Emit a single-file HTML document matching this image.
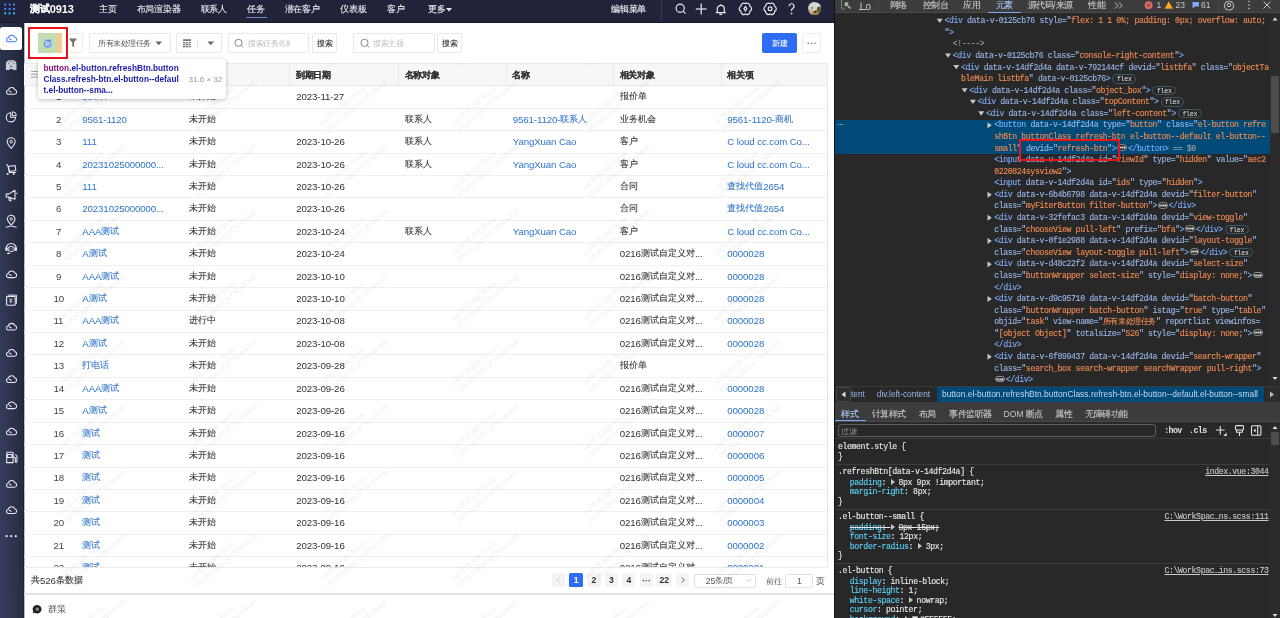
<!DOCTYPE html><html><head><meta charset="utf-8"><style>
*{box-sizing:border-box;margin:0;padding:0}
html,body{width:1280px;height:618px;overflow:hidden;background:#fff;font-family:"Liberation Sans",sans-serif}
.a{position:absolute}
#topnav{left:0;top:0;width:834px;height:23px;background:#1f2140;border-bottom:1px solid #15172e}
#side{left:0;top:23px;width:24px;height:595px;background:linear-gradient(#262a40,#3a4160)}
#content{left:24px;top:23px;width:810px;height:595px;background:#fff}
#dt{left:834px;top:0;width:446px;height:618px;background:#282828;border-left:1px solid #111}
.nv{position:absolute;color:#e8e8ee;font-size:9px;top:3px;white-space:nowrap}
.c{position:absolute;font-size:9.3px;color:#333;white-space:nowrap;line-height:12px}
.lk{color:#2e73c4}
.hd{position:absolute;font-size:8.8px;font-weight:bold;color:#333;white-space:nowrap;line-height:12px}
.btn{position:absolute;border:1px solid #e6e6e6;border-radius:2px;background:#fff}
.ln{position:absolute;white-space:pre;font-family:"Liberation Mono",monospace;font-size:8.2px;letter-spacing:-0.39px;-webkit-text-stroke:0.12px currentColor;color:#e8eaed;height:11.5px;line-height:11.5px}
.tg{color:#7cacf8}.an{color:#9ab6e8}.av{color:#f28b54}.cm{color:#a09b8f}.gr{color:#9aa0a6}
.badge{display:inline-block;border:1px solid #3e5868;border-radius:5px;font-family:"Liberation Mono",monospace;font-size:6.5px;letter-spacing:-0.2px;-webkit-text-stroke:0;line-height:9px;height:9.5px;padding:0 3.5px;color:#e0e0e0;vertical-align:middle;margin-left:2px}
.ell{display:inline-block;width:9.5px;height:6.5px;background:#2a2a2a;border:1px solid #8a8a8a;border-radius:3.5px;vertical-align:middle;position:relative;top:-1px;margin-left:1px;margin-right:1px;background-image:radial-gradient(circle,#eee 0.8px,transparent 1px);background-size:2.2px 6px;background-position:1px -0.5px;background-repeat:repeat-x}
.sl{position:absolute;white-space:pre;font-family:"Liberation Mono",monospace;font-size:8.2px;letter-spacing:-0.39px;-webkit-text-stroke:0.12px currentColor;color:#e8eaed;line-height:9.6px;height:9.6px}
.pn{color:#5cd5fb}
</style></head><body>
<div class="a" style="left:0;top:0;width:834px;height:23px;background:#21233b;border-bottom:1px solid #17192c"></div>
<svg class="a" style="left:0;top:0" width="24" height="22"><circle cx="5.2" cy="4.6" r="1.15" fill="#3d8df5"/><circle cx="9.6" cy="4.6" r="1.15" fill="#3d8df5"/><circle cx="14.0" cy="4.6" r="1.15" fill="#3d8df5"/><circle cx="5.2" cy="9.0" r="1.15" fill="#3d8df5"/><circle cx="9.6" cy="9.0" r="1.15" fill="#3d8df5"/><circle cx="14.0" cy="9.0" r="1.15" fill="#3d8df5"/><circle cx="5.2" cy="13.4" r="1.15" fill="#3fb6e8"/><circle cx="9.6" cy="13.4" r="1.15" fill="#3fb6e8"/><circle cx="14.0" cy="13.4" r="1.15" fill="#3fb6e8"/></svg>
<div class="a" style="left:29.5px;top:1.8px;white-space:nowrap;line-height:12px;color:#fff;font-weight:bold"><span style="font-size:10px;letter-spacing:0.15px;-webkit-text-stroke:0.15px #fff;vertical-align:0.9px">测试</span><span style="font-size:11px;letter-spacing:-0.1px">0913</span></div>
<div class="a" style="left:99px;top:1.6px;white-space:nowrap;line-height:12px;color:#ececf2;"><span style="font-size:9px;letter-spacing:-0.20px;-webkit-text-stroke:0.1px currentColor;vertical-align:0.6px">主页</span></div>
<div class="a" style="left:136.5px;top:1.6px;white-space:nowrap;line-height:12px;color:#ececf2;"><span style="font-size:9px;letter-spacing:-0.20px;-webkit-text-stroke:0.1px currentColor;vertical-align:0.6px">布局渲染器</span></div>
<div class="a" style="left:200.5px;top:1.6px;white-space:nowrap;line-height:12px;color:#ececf2;"><span style="font-size:9px;letter-spacing:-0.20px;-webkit-text-stroke:0.1px currentColor;vertical-align:0.6px">联系人</span></div>
<div class="a" style="left:247px;top:1.6px;white-space:nowrap;line-height:12px;color:#ececf2;"><span style="font-size:9px;letter-spacing:-0.20px;-webkit-text-stroke:0.1px currentColor;vertical-align:0.6px">任务</span></div>
<div class="a" style="left:284.5px;top:1.6px;white-space:nowrap;line-height:12px;color:#ececf2;"><span style="font-size:9px;letter-spacing:-0.20px;-webkit-text-stroke:0.1px currentColor;vertical-align:0.6px">潜在客户</span></div>
<div class="a" style="left:340px;top:1.6px;white-space:nowrap;line-height:12px;color:#ececf2;"><span style="font-size:9px;letter-spacing:-0.20px;-webkit-text-stroke:0.1px currentColor;vertical-align:0.6px">仪表板</span></div>
<div class="a" style="left:387px;top:1.6px;white-space:nowrap;line-height:12px;color:#ececf2;"><span style="font-size:9px;letter-spacing:-0.20px;-webkit-text-stroke:0.1px currentColor;vertical-align:0.6px">客户</span></div>
<div class="a" style="left:428px;top:1.6px;white-space:nowrap;line-height:12px;color:#ececf2;"><span style="font-size:9px;letter-spacing:-0.20px;-webkit-text-stroke:0.1px currentColor;vertical-align:0.6px">更多</span></div>
<svg class="a" style="left:445px;top:6.5px" width="8" height="6"><path d="M1 1 h6 l-3 3.5 z" fill="#e6e7ee"/></svg>
<div class="a" style="left:245.5px;top:16.6px;width:21px;height:1.8px;background:#7486c8"></div>
<div class="a" style="left:611px;top:1.6px;white-space:nowrap;line-height:12px;color:#ececf2;"><span style="font-size:9px;letter-spacing:-0.20px;-webkit-text-stroke:0.15px currentColor;vertical-align:0.6px">编辑菜单</span></div>
<div class="a" style="left:660.5px;top:0;width:1px;height:22px;background:#34375a"></div>
<svg class="a" style="left:660px;top:0" width="174" height="22" fill="none" stroke="#e9eaf0" stroke-width="1.2">
<circle cx="20.2" cy="8.3" r="4.1"/><line x1="23.2" y1="11.3" x2="25.6" y2="13.7"/>
<line x1="41.2" y1="3.5" x2="41.2" y2="14.5"/><line x1="35.8" y1="9" x2="46.6" y2="9"/>
<path d="M55.8 12.6 h10 M57.3 12.6 v-3.8 a3.5 3.5 0 0 1 7 0 v3.8 M59.4 14.4 h2.8 M60.8 4.2 v0.6"/>
<path d="M85.40 3.60 A2.86 2.86 0 0 1 89.90 6.20 A2.86 2.86 0 0 1 89.90 11.40 A2.86 2.86 0 0 1 85.40 14.00 A2.86 2.86 0 0 1 80.90 11.40 A2.86 2.86 0 0 1 80.90 6.20 A2.86 2.86 0 0 1 85.40 3.60 Z"/><path d="M85.4 6.6 l1.4 2.2 l-1.4 2.2 l-1.4 -2.2 z"/>
<path d="M110.10 3.60 A2.86 2.86 0 0 1 114.60 6.20 A2.86 2.86 0 0 1 114.60 11.40 A2.86 2.86 0 0 1 110.10 14.00 A2.86 2.86 0 0 1 105.60 11.40 A2.86 2.86 0 0 1 105.60 6.20 A2.86 2.86 0 0 1 110.10 3.60 Z"/><circle cx="110.1" cy="8.8" r="1.9"/>
<path d="M129 6.2 a2.5 2.5 0 1 1 3.6 2.3 c-0.9 0.45 -1.1 1 -1.1 2.4"/><circle cx="131.5" cy="13.4" r="0.35" fill="#e9eaf0"/>
</svg>
<svg class="a" style="left:808px;top:2px" width="13.4" height="13.4"><defs><clipPath id="av"><circle cx="6.6" cy="6.6" r="6.55"/></clipPath><filter id="bl"><feGaussianBlur stdDeviation="0.7"/></filter></defs><g clip-path="url(#av)"><rect width="14" height="14" fill="#b8ab90"/><g filter="url(#bl)"><ellipse cx="5" cy="4.5" rx="5" ry="4.5" fill="#d6d5d0"/><ellipse cx="4" cy="6" rx="1.5" ry="1.2" fill="#9a9a94"/><ellipse cx="10.5" cy="3" rx="2.5" ry="2.5" fill="#dcdcd8"/><ellipse cx="11" cy="8" rx="2.2" ry="3.5" fill="#5a5a3a"/><ellipse cx="7" cy="11" rx="3.5" ry="2.5" fill="#a08050"/><ellipse cx="3" cy="9.5" rx="2" ry="2" fill="#c9b48a"/><circle cx="7.5" cy="9.8" r="1" fill="#2a2520"/></g></g></svg>
<div class="a" style="left:0;top:23px;width:24px;height:595px;background:linear-gradient(to right,#353c5a,#2a2f47 70%,#242840)"></div>
<div class="a" style="left:0;top:23px;width:24px;height:595px;background:linear-gradient(rgba(20,22,40,0.25),rgba(20,22,40,0) 60%,rgba(80,90,130,0.08))"></div>
<div class="a" style="left:23px;top:23px;width:1px;height:595px;background:#1d2136"></div>
<div class="a" style="left:24px;top:23px;width:1px;height:595px;background:#b9bac4"></div>
<div class="a" style="left:0;top:27.2px;width:22.2px;height:22.6px;background:#fff;border-radius:2.5px"></div>
<svg class="a" style="left:0;top:0" width="24" height="618"><path d="M8.00 41.80 H14.40 A2.30 2.30 0 0 0 15.00 37.30 A3.70 3.70 0 0 0 8.10 37.80 A2.05 2.05 0 0 0 8.00 41.80 Z M9.40 38.60 L11.10 39.70" stroke="#3d7cf5" stroke-width="1.05" fill="none" stroke-linejoin="round" stroke-linecap="round"/><path d="M5.8999999999999995 70.0 V64.19999999999999 Q5.8999999999999995 59.99999999999999 11.2 59.99999999999999 Q16.5 59.99999999999999 16.5 64.19999999999999 V70.0 H13.2 L12.2 68.89999999999999 H10.2 L9.2 70.0 Z" fill="#c9cbd4"/><g fill="#6d7080"><circle cx="8.6" cy="63.39999999999999" r="0.7"/><circle cx="13.799999999999999" cy="63.39999999999999" r="0.7"/><rect x="10.299999999999999" y="65.6" width="1.8" height="1.6"/><rect x="9.2" y="61.39999999999999" width="4" height="0.6"/></g><path d="M8.00 94.20 H14.40 A2.30 2.30 0 0 0 15.00 89.70 A3.70 3.70 0 0 0 8.10 90.20 A2.05 2.05 0 0 0 8.00 94.20 Z M9.40 91.00 L11.10 92.10" stroke="#e9ebf2" stroke-width="1.05" fill="none" stroke-linejoin="round" stroke-linecap="round"/><path d="M10.7 112.7 a4.6 4.6 0 1 0 4.8 4.6 h-4.8 z" stroke="#e9ebf2" stroke-width="1.05" fill="none"/><path d="M12.399999999999999 111.7 a4 4 0 0 1 4 4 h-4 z" stroke="#e9ebf2" stroke-width="1" fill="none"/><path d="M11.2 148.39999999999998 c-2.5 -2.8 -4 -4.8 -4 -6.6 a4 4 0 0 1 8 0 c0 1.8 -1.5 3.8 -4 6.6 z" stroke="#e9ebf2" stroke-width="1.05" fill="none"/><circle cx="11.2" cy="141.7" r="1.3" stroke="#e9ebf2" stroke-width="1" fill="none"/><path d="M6.199999999999999 164.4 l1.5 0.5 l1.6 7.5 h6.8 M8.2 166.4 l6.8 -1 l0.9 5.2 l-6.2 0.8 z" stroke="#e9ebf2" stroke-width="1.05" fill="none" stroke-linejoin="round"/><circle cx="7.699999999999999" cy="174.0" r="1.1" fill="#e9ebf2"/><circle cx="13.7" cy="174.0" r="0.9" fill="#e9ebf2"/><path d="M6.199999999999999 194.1 h2.2 l6.6 -3.8 v9 l-6.6 -2.4 h-2.2 z M8.399999999999999 196.9 l1 3.8 h1.6 l-0.6 -3" stroke="#e9ebf2" stroke-width="1.05" fill="none" stroke-linejoin="round"/><path d="M15.7 194.0 l1.8 -1" stroke="#e9ebf2" stroke-width="1"/><path d="M11.2 225.0 c-2.4 -2.5 -3.8 -4.3 -3.8 -6 a3.8 3.8 0 0 1 7.6 0 c0 1.7 -1.4 3.5 -3.8 6 z" stroke="#e9ebf2" stroke-width="1.05" fill="none"/><circle cx="11.2" cy="219.0" r="1.2" stroke="#e9ebf2" stroke-width="0.9" fill="none"/><path d="M5.699999999999999 227.4 q5.5 -3 11 0" stroke="#e9ebf2" stroke-width="1" fill="none"/><path d="M6.199999999999999 248.5 a5 5 0 0 1 10 0" stroke="#e9ebf2" stroke-width="1.1" fill="none"/><rect x="5.3999999999999995" y="247.2" width="2.3" height="3.8" rx="1" fill="#e9ebf2"/><rect x="14.7" y="247.2" width="2.3" height="3.8" rx="1" fill="#e9ebf2"/><ellipse cx="11.2" cy="249.0" rx="3.2" ry="2.6" stroke="#e9ebf2" stroke-width="1" fill="none"/><path d="M9.799999999999999 249.0 h0.8 M11.799999999999999 249.0 h0.8" stroke="#e9ebf2" stroke-width="1"/><path d="M8.7 252.3 l-1.5 1.2 h3" stroke="#e9ebf2" stroke-width="0.9" fill="none"/><path d="M8.00 277.60 H14.40 A2.30 2.30 0 0 0 15.00 273.10 A3.70 3.70 0 0 0 8.10 273.60 A2.05 2.05 0 0 0 8.00 277.60 Z M9.40 274.40 L11.10 275.50" stroke="#e9ebf2" stroke-width="1.05" fill="none" stroke-linejoin="round" stroke-linecap="round"/><rect x="6.6" y="296.4" width="8.6" height="8.8" rx="0.8" stroke="#e9ebf2" stroke-width="1.1" fill="none"/><path d="M8.2 295.09999999999997 h8.3 v8.6" stroke="#e9ebf2" stroke-width="0.9" fill="none"/><path d="M9.2 298.2 l1.7 2 l1.7 -2 M10.899999999999999 300.2 v3 M9.399999999999999 301.2 h3" stroke="#e9ebf2" stroke-width="0.8" fill="none"/><path d="M8.00 330.00 H14.40 A2.30 2.30 0 0 0 15.00 325.50 A3.70 3.70 0 0 0 8.10 326.00 A2.05 2.05 0 0 0 8.00 330.00 Z M9.40 326.80 L11.10 327.90" stroke="#e9ebf2" stroke-width="1.05" fill="none" stroke-linejoin="round" stroke-linecap="round"/><path d="M8.00 356.20 H14.40 A2.30 2.30 0 0 0 15.00 351.70 A3.70 3.70 0 0 0 8.10 352.20 A2.05 2.05 0 0 0 8.00 356.20 Z M9.40 353.00 L11.10 354.10" stroke="#e9ebf2" stroke-width="1.05" fill="none" stroke-linejoin="round" stroke-linecap="round"/><path d="M8.00 382.40 H14.40 A2.30 2.30 0 0 0 15.00 377.90 A3.70 3.70 0 0 0 8.10 378.40 A2.05 2.05 0 0 0 8.00 382.40 Z M9.40 379.20 L11.10 380.30" stroke="#e9ebf2" stroke-width="1.05" fill="none" stroke-linejoin="round" stroke-linecap="round"/><path d="M8.00 408.60 H14.40 A2.30 2.30 0 0 0 15.00 404.10 A3.70 3.70 0 0 0 8.10 404.60 A2.05 2.05 0 0 0 8.00 408.60 Z M9.40 405.40 L11.10 406.50" stroke="#e9ebf2" stroke-width="1.05" fill="none" stroke-linejoin="round" stroke-linecap="round"/><path d="M8.00 434.80 H14.40 A2.30 2.30 0 0 0 15.00 430.30 A3.70 3.70 0 0 0 8.10 430.80 A2.05 2.05 0 0 0 8.00 434.80 Z M9.40 431.60 L11.10 432.70" stroke="#e9ebf2" stroke-width="1.05" fill="none" stroke-linejoin="round" stroke-linecap="round"/><path d="M6.699999999999999 462.59999999999997 v-9.5 a0.8 0.8 0 0 1 0.8 -0.8 h4.8 a0.8 0.8 0 0 1 0.8 0.8 v9.5 M5.8999999999999995 462.59999999999997 h7.6 M7.699999999999999 454.4 h4.2 v3 h-4.2 z M13.1 456.59999999999997 l2.2 1.2 v3.8 a0.8 0.8 0 0 0 1.6 0 v-5.5 l-1.6 -1.6" stroke="#e9ebf2" stroke-width="1.05" fill="none" stroke-linejoin="round"/><path d="M8.00 487.20 H14.40 A2.30 2.30 0 0 0 15.00 482.70 A3.70 3.70 0 0 0 8.10 483.20 A2.05 2.05 0 0 0 8.00 487.20 Z M9.40 484.00 L11.10 485.10" stroke="#e9ebf2" stroke-width="1.05" fill="none" stroke-linejoin="round" stroke-linecap="round"/><path d="M8.00 513.40 H14.40 A2.30 2.30 0 0 0 15.00 508.90 A3.70 3.70 0 0 0 8.10 509.40 A2.05 2.05 0 0 0 8.00 513.40 Z M9.40 510.20 L11.10 511.30" stroke="#e9ebf2" stroke-width="1.05" fill="none" stroke-linejoin="round" stroke-linecap="round"/><g fill="#e9ebf2"><circle cx="6.6" cy="536.2" r="1.1"/><circle cx="11.2" cy="536.2" r="1.1"/><circle cx="15.799999999999999" cy="536.2" r="1.1"/></g></svg>
<div class="a" style="left:25px;top:23px;width:809px;height:595px;background:#fff"></div>
<div class="a" style="left:66px;top:33.3px;width:17.20px;height:19.60px;border:1px solid #ececec;border-radius:2px;background:#fff"></div>
<svg class="a" style="left:62px;top:33px" width="22" height="20"><path d="M6.9 5.4 h8.1 l-3 4 v4.3 q0 0.5 -0.5 0.3 l-1.3 -0.8 v-3.8 z" fill="#737373"/></svg>
<div class="a" style="left:89px;top:33.3px;width:82.30px;height:19.60px;border:1px solid #e8e8e8;border-radius:2px;background:#fff"></div>
<div class="a" style="left:98.2px;top:36.3px;white-space:nowrap;line-height:12px;color:#555;"><span style="font-size:8px;letter-spacing:-0.50px;-webkit-text-stroke:0px currentColor;vertical-align:0.6px">所有未处理任务</span></div>
<svg class="a" style="left:154.5px;top:40.5px" width="8" height="6"><path d="M0.5 0.5 h6.4 l-3.2 3.8 z" fill="#666"/></svg>
<div class="a" style="left:176.4px;top:33.3px;width:45.20px;height:19.60px;border:1px solid #e8e8e8;border-radius:2px;background:#fff"></div>
<svg class="a" style="left:182px;top:38px" width="10" height="10" fill="#6a6a6a"><rect x="1" y="1.3" width="8" height="1.6"/><rect x="1.0" y="4.1" width="2.2" height="1.2"/><rect x="1.0" y="6.1" width="2.2" height="1.2"/><rect x="1.0" y="8.1" width="2.2" height="1.2"/><rect x="3.8" y="4.1" width="2.2" height="1.2"/><rect x="3.8" y="6.1" width="2.2" height="1.2"/><rect x="3.8" y="8.1" width="2.2" height="1.2"/><rect x="6.6" y="4.1" width="2.2" height="1.2"/><rect x="6.6" y="6.1" width="2.2" height="1.2"/><rect x="6.6" y="8.1" width="2.2" height="1.2"/></svg>
<div class="a" style="left:196.8px;top:39.3px;width:0.8px;height:8px;background:#dedede"></div>
<svg class="a" style="left:207.3px;top:40.5px" width="8" height="6"><path d="M0.5 0.5 h6.4 l-3.2 3.8 z" fill="#666"/></svg>
<div class="a" style="left:227.5px;top:33.3px;width:81.80px;height:19.60px;border:1px solid #e8e8e8;border-radius:2px;background:#fff"></div>
<svg class="a" style="left:233px;top:37px" width="12" height="12" fill="none" stroke="#8a8a8a" stroke-width="1"><circle cx="5.5" cy="5.8" r="3.6"/><line x1="8.1" y1="8.4" x2="10.2" y2="10.5"/></svg>
<div class="a" style="left:248px;top:36.3px;width:42px;overflow:hidden;white-space:nowrap;line-height:12px;color:#c0c0c0"><span style="font-size:8px;letter-spacing:-0.50px;-webkit-text-stroke:0px currentColor;vertical-align:0.6px">搜索任务名称</span></div>
<div class="a" style="left:312.2px;top:33.3px;width:24.60px;height:19.60px;border:1px solid #e8e8e8;border-radius:2px;background:#fff"></div>
<div class="a" style="left:317px;top:36.3px;white-space:nowrap;line-height:12px;color:#333;"><span style="font-size:8px;letter-spacing:-0.50px;-webkit-text-stroke:0.08px currentColor;vertical-align:0.6px">搜索</span></div>
<div class="a" style="left:353px;top:33.3px;width:81.50px;height:19.60px;border:1px solid #e8e8e8;border-radius:2px;background:#fff"></div>
<svg class="a" style="left:358.5px;top:37px" width="12" height="12" fill="none" stroke="#8a8a8a" stroke-width="1"><circle cx="5.5" cy="5.8" r="3.6"/><line x1="8.1" y1="8.4" x2="10.2" y2="10.5"/></svg>
<div class="a" style="left:373px;top:36.3px;white-space:nowrap;line-height:12px;color:#c0c0c0;"><span style="font-size:8px;letter-spacing:-0.50px;-webkit-text-stroke:0px currentColor;vertical-align:0.6px">搜索主题</span></div>
<div class="a" style="left:437.3px;top:33.3px;width:25.20px;height:19.60px;border:1px solid #e8e8e8;border-radius:2px;background:#fff"></div>
<div class="a" style="left:442px;top:36.3px;white-space:nowrap;line-height:12px;color:#333;"><span style="font-size:8px;letter-spacing:-0.50px;-webkit-text-stroke:0.08px currentColor;vertical-align:0.6px">搜索</span></div>
<div class="a" style="left:762px;top:33.4px;width:35.3px;height:19.6px;background:#2f6cf6;border-radius:2px"></div>
<div class="a" style="left:772.2px;top:36.3px;white-space:nowrap;line-height:12px;color:#fff;"><span style="font-size:8px;letter-spacing:-0.50px;-webkit-text-stroke:0.05px currentColor;vertical-align:0.6px">新建</span></div>
<div class="a" style="left:802px;top:33.2px;width:19.00px;height:19.70px;border:1px solid #ececec;border-radius:2px;background:#fff"></div>
<svg class="a" style="left:802px;top:33px" width="19" height="20" fill="#666"><circle cx="6.2" cy="10.3" r="0.75"/><circle cx="9.6" cy="10.3" r="0.75"/><circle cx="13" cy="10.3" r="0.75"/></svg>
<div class="a" style="left:24.3px;top:63.2px;width:803px;height:22.8px;background:#f7f7f7;border-top:1px solid #e9e9e9;border-bottom:1px solid #e9e9e9"></div>
<div class="a" style="left:827px;top:63.2px;width:1px;height:504px;background:#e6e6e6"></div>
<div class="a" style="left:289.3px;top:64.2px;width:0.8px;height:20.8px;background:#e9e9e9"></div>
<div class="a" style="left:397.8px;top:64.2px;width:0.8px;height:20.8px;background:#e9e9e9"></div>
<div class="a" style="left:505.8px;top:64.2px;width:0.8px;height:20.8px;background:#e9e9e9"></div>
<div class="a" style="left:612.9px;top:64.2px;width:0.8px;height:20.8px;background:#e9e9e9"></div>
<div class="a" style="left:720.8px;top:64.2px;width:0.8px;height:20.8px;background:#e9e9e9"></div>
<div class="a" style="left:295.8px;top:68.2px;white-space:nowrap;line-height:12px;color:#333;font-weight:bold"><span style="font-size:9px;letter-spacing:-0.25px;-webkit-text-stroke:0.12px currentColor;vertical-align:0.6px">到期日期</span></div>
<div class="a" style="left:404.6px;top:68.2px;white-space:nowrap;line-height:12px;color:#333;font-weight:bold"><span style="font-size:9px;letter-spacing:-0.25px;-webkit-text-stroke:0.12px currentColor;vertical-align:0.6px">名称对象</span></div>
<div class="a" style="left:512.3px;top:68.2px;white-space:nowrap;line-height:12px;color:#333;font-weight:bold"><span style="font-size:9px;letter-spacing:-0.25px;-webkit-text-stroke:0.12px currentColor;vertical-align:0.6px">名称</span></div>
<div class="a" style="left:619.6px;top:68.2px;white-space:nowrap;line-height:12px;color:#333;font-weight:bold"><span style="font-size:9px;letter-spacing:-0.25px;-webkit-text-stroke:0.12px currentColor;vertical-align:0.6px">相关对象</span></div>
<div class="a" style="left:727.3px;top:68.2px;white-space:nowrap;line-height:12px;color:#333;font-weight:bold"><span style="font-size:9px;letter-spacing:-0.25px;-webkit-text-stroke:0.12px currentColor;vertical-align:0.6px">相关项</span></div>
<svg class="a" style="left:31px;top:69.7px" width="10" height="10" fill="#999"><rect x="0" y="1" width="8" height="0.9"/><rect x="0" y="3.8" width="8" height="0.9"/><rect x="0" y="6.6" width="8" height="0.9"/></svg>
<div class="a" style="left:24.3px;top:86.4px;width:802.7px;height:481.10px;overflow:hidden">
<div class="a" style="left:0;top:21.42px;width:803px;height:1px;background:#f0f0f0"></div>
<div class="a" style="left:31.80px;top:2.90px;white-space:nowrap;line-height:12px;color:#444"><span style="font-size:9.7px;letter-spacing:-0.12px">1</span></div>
<div class="a" style="left:58px;top:2.90px;white-space:nowrap;line-height:12px;color:#2f74c8"><span style="font-size:9px;letter-spacing:0.00px;-webkit-text-stroke:0.08px currentColor;vertical-align:0.6px">发邮件</span></div>
<div class="a" style="left:165px;top:2.90px;white-space:nowrap;line-height:12px;color:#333"><span style="font-size:9px;letter-spacing:0.00px;-webkit-text-stroke:0.08px currentColor;vertical-align:0.6px">未开始</span></div>
<div class="a" style="left:272px;top:2.90px;white-space:nowrap;line-height:12px;color:#333"><span style="font-size:9.7px;letter-spacing:-0.12px">2023-11-27</span></div>
<div class="a" style="left:595.5px;top:2.90px;white-space:nowrap;line-height:12px;color:#333"><span style="font-size:9px;letter-spacing:0.00px;-webkit-text-stroke:0.08px currentColor;vertical-align:0.6px">报价单</span></div>
<div class="a" style="left:0;top:43.84px;width:803px;height:1px;background:#f0f0f0"></div>
<div class="a" style="left:31.80px;top:25.32px;white-space:nowrap;line-height:12px;color:#444"><span style="font-size:9.7px;letter-spacing:-0.12px">2</span></div>
<div class="a" style="left:58px;top:25.32px;white-space:nowrap;line-height:12px;color:#2f74c8"><span style="font-size:9.7px;letter-spacing:-0.12px">9561-1120</span></div>
<div class="a" style="left:165px;top:25.32px;white-space:nowrap;line-height:12px;color:#333"><span style="font-size:9px;letter-spacing:0.00px;-webkit-text-stroke:0.08px currentColor;vertical-align:0.6px">未开始</span></div>
<div class="a" style="left:381px;top:25.32px;white-space:nowrap;line-height:12px;color:#333"><span style="font-size:9px;letter-spacing:0.00px;-webkit-text-stroke:0.08px currentColor;vertical-align:0.6px">联系人</span></div>
<div class="a" style="left:488.5px;top:25.32px;white-space:nowrap;line-height:12px;color:#2f74c8"><span style="font-size:9.7px;letter-spacing:-0.12px">9561-1120-</span><span style="font-size:9px;letter-spacing:0.00px;-webkit-text-stroke:0.08px currentColor;vertical-align:0.6px">联系人</span></div>
<div class="a" style="left:595.5px;top:25.32px;white-space:nowrap;line-height:12px;color:#333"><span style="font-size:9px;letter-spacing:0.00px;-webkit-text-stroke:0.08px currentColor;vertical-align:0.6px">业务机会</span></div>
<div class="a" style="left:703px;top:25.32px;white-space:nowrap;line-height:12px;color:#2f74c8"><span style="font-size:9.7px;letter-spacing:-0.12px">9561-1120-</span><span style="font-size:9px;letter-spacing:0.00px;-webkit-text-stroke:0.08px currentColor;vertical-align:0.6px">商机</span></div>
<div class="a" style="left:0;top:66.26px;width:803px;height:1px;background:#f0f0f0"></div>
<div class="a" style="left:31.80px;top:47.74px;white-space:nowrap;line-height:12px;color:#444"><span style="font-size:9.7px;letter-spacing:-0.12px">3</span></div>
<div class="a" style="left:58px;top:47.74px;white-space:nowrap;line-height:12px;color:#2f74c8"><span style="font-size:9.7px;letter-spacing:-0.12px">111</span></div>
<div class="a" style="left:165px;top:47.74px;white-space:nowrap;line-height:12px;color:#333"><span style="font-size:9px;letter-spacing:0.00px;-webkit-text-stroke:0.08px currentColor;vertical-align:0.6px">未开始</span></div>
<div class="a" style="left:272px;top:47.74px;white-space:nowrap;line-height:12px;color:#333"><span style="font-size:9.7px;letter-spacing:-0.12px">2023-10-26</span></div>
<div class="a" style="left:381px;top:47.74px;white-space:nowrap;line-height:12px;color:#333"><span style="font-size:9px;letter-spacing:0.00px;-webkit-text-stroke:0.08px currentColor;vertical-align:0.6px">联系人</span></div>
<div class="a" style="left:488.5px;top:47.74px;white-space:nowrap;line-height:12px;color:#2f74c8"><span style="font-size:9.7px;letter-spacing:-0.12px">YangXuan Cao</span></div>
<div class="a" style="left:595.5px;top:47.74px;white-space:nowrap;line-height:12px;color:#333"><span style="font-size:9px;letter-spacing:0.00px;-webkit-text-stroke:0.08px currentColor;vertical-align:0.6px">客户</span></div>
<div class="a" style="left:703px;top:47.74px;white-space:nowrap;line-height:12px;color:#2f74c8"><span style="font-size:9.7px;letter-spacing:-0.12px">C loud cc.com Co...</span></div>
<div class="a" style="left:0;top:88.68px;width:803px;height:1px;background:#f0f0f0"></div>
<div class="a" style="left:31.80px;top:70.16px;white-space:nowrap;line-height:12px;color:#444"><span style="font-size:9.7px;letter-spacing:-0.12px">4</span></div>
<div class="a" style="left:58px;top:70.16px;white-space:nowrap;line-height:12px;color:#2f74c8"><span style="font-size:9.7px;letter-spacing:-0.12px">20231025000000...</span></div>
<div class="a" style="left:165px;top:70.16px;white-space:nowrap;line-height:12px;color:#333"><span style="font-size:9px;letter-spacing:0.00px;-webkit-text-stroke:0.08px currentColor;vertical-align:0.6px">未开始</span></div>
<div class="a" style="left:272px;top:70.16px;white-space:nowrap;line-height:12px;color:#333"><span style="font-size:9.7px;letter-spacing:-0.12px">2023-10-26</span></div>
<div class="a" style="left:381px;top:70.16px;white-space:nowrap;line-height:12px;color:#333"><span style="font-size:9px;letter-spacing:0.00px;-webkit-text-stroke:0.08px currentColor;vertical-align:0.6px">联系人</span></div>
<div class="a" style="left:488.5px;top:70.16px;white-space:nowrap;line-height:12px;color:#2f74c8"><span style="font-size:9.7px;letter-spacing:-0.12px">YangXuan Cao</span></div>
<div class="a" style="left:595.5px;top:70.16px;white-space:nowrap;line-height:12px;color:#333"><span style="font-size:9px;letter-spacing:0.00px;-webkit-text-stroke:0.08px currentColor;vertical-align:0.6px">客户</span></div>
<div class="a" style="left:703px;top:70.16px;white-space:nowrap;line-height:12px;color:#2f74c8"><span style="font-size:9.7px;letter-spacing:-0.12px">C loud cc.com Co...</span></div>
<div class="a" style="left:0;top:111.10px;width:803px;height:1px;background:#f0f0f0"></div>
<div class="a" style="left:31.80px;top:92.58px;white-space:nowrap;line-height:12px;color:#444"><span style="font-size:9.7px;letter-spacing:-0.12px">5</span></div>
<div class="a" style="left:58px;top:92.58px;white-space:nowrap;line-height:12px;color:#2f74c8"><span style="font-size:9.7px;letter-spacing:-0.12px">111</span></div>
<div class="a" style="left:165px;top:92.58px;white-space:nowrap;line-height:12px;color:#333"><span style="font-size:9px;letter-spacing:0.00px;-webkit-text-stroke:0.08px currentColor;vertical-align:0.6px">未开始</span></div>
<div class="a" style="left:272px;top:92.58px;white-space:nowrap;line-height:12px;color:#333"><span style="font-size:9.7px;letter-spacing:-0.12px">2023-10-26</span></div>
<div class="a" style="left:595.5px;top:92.58px;white-space:nowrap;line-height:12px;color:#333"><span style="font-size:9px;letter-spacing:0.00px;-webkit-text-stroke:0.08px currentColor;vertical-align:0.6px">合同</span></div>
<div class="a" style="left:703px;top:92.58px;white-space:nowrap;line-height:12px;color:#2f74c8"><span style="font-size:9px;letter-spacing:0.00px;-webkit-text-stroke:0.08px currentColor;vertical-align:0.6px">查找代值</span><span style="font-size:9.7px;letter-spacing:-0.12px">2654</span></div>
<div class="a" style="left:0;top:133.52px;width:803px;height:1px;background:#f0f0f0"></div>
<div class="a" style="left:31.80px;top:115.00px;white-space:nowrap;line-height:12px;color:#444"><span style="font-size:9.7px;letter-spacing:-0.12px">6</span></div>
<div class="a" style="left:58px;top:115.00px;white-space:nowrap;line-height:12px;color:#2f74c8"><span style="font-size:9.7px;letter-spacing:-0.12px">20231025000000...</span></div>
<div class="a" style="left:165px;top:115.00px;white-space:nowrap;line-height:12px;color:#333"><span style="font-size:9px;letter-spacing:0.00px;-webkit-text-stroke:0.08px currentColor;vertical-align:0.6px">未开始</span></div>
<div class="a" style="left:272px;top:115.00px;white-space:nowrap;line-height:12px;color:#333"><span style="font-size:9.7px;letter-spacing:-0.12px">2023-10-26</span></div>
<div class="a" style="left:595.5px;top:115.00px;white-space:nowrap;line-height:12px;color:#333"><span style="font-size:9px;letter-spacing:0.00px;-webkit-text-stroke:0.08px currentColor;vertical-align:0.6px">合同</span></div>
<div class="a" style="left:703px;top:115.00px;white-space:nowrap;line-height:12px;color:#2f74c8"><span style="font-size:9px;letter-spacing:0.00px;-webkit-text-stroke:0.08px currentColor;vertical-align:0.6px">查找代值</span><span style="font-size:9.7px;letter-spacing:-0.12px">2654</span></div>
<div class="a" style="left:0;top:155.94px;width:803px;height:1px;background:#f0f0f0"></div>
<div class="a" style="left:31.80px;top:137.42px;white-space:nowrap;line-height:12px;color:#444"><span style="font-size:9.7px;letter-spacing:-0.12px">7</span></div>
<div class="a" style="left:58px;top:137.42px;white-space:nowrap;line-height:12px;color:#2f74c8"><span style="font-size:9.7px;letter-spacing:-0.12px">AAA</span><span style="font-size:9px;letter-spacing:0.00px;-webkit-text-stroke:0.08px currentColor;vertical-align:0.6px">测试</span></div>
<div class="a" style="left:165px;top:137.42px;white-space:nowrap;line-height:12px;color:#333"><span style="font-size:9px;letter-spacing:0.00px;-webkit-text-stroke:0.08px currentColor;vertical-align:0.6px">未开始</span></div>
<div class="a" style="left:272px;top:137.42px;white-space:nowrap;line-height:12px;color:#333"><span style="font-size:9.7px;letter-spacing:-0.12px">2023-10-24</span></div>
<div class="a" style="left:381px;top:137.42px;white-space:nowrap;line-height:12px;color:#333"><span style="font-size:9px;letter-spacing:0.00px;-webkit-text-stroke:0.08px currentColor;vertical-align:0.6px">联系人</span></div>
<div class="a" style="left:488.5px;top:137.42px;white-space:nowrap;line-height:12px;color:#2f74c8"><span style="font-size:9.7px;letter-spacing:-0.12px">YangXuan Cao</span></div>
<div class="a" style="left:595.5px;top:137.42px;white-space:nowrap;line-height:12px;color:#333"><span style="font-size:9px;letter-spacing:0.00px;-webkit-text-stroke:0.08px currentColor;vertical-align:0.6px">客户</span></div>
<div class="a" style="left:703px;top:137.42px;white-space:nowrap;line-height:12px;color:#2f74c8"><span style="font-size:9.7px;letter-spacing:-0.12px">C loud cc.com Co...</span></div>
<div class="a" style="left:0;top:178.36px;width:803px;height:1px;background:#f0f0f0"></div>
<div class="a" style="left:31.80px;top:159.84px;white-space:nowrap;line-height:12px;color:#444"><span style="font-size:9.7px;letter-spacing:-0.12px">8</span></div>
<div class="a" style="left:58px;top:159.84px;white-space:nowrap;line-height:12px;color:#2f74c8"><span style="font-size:9.7px;letter-spacing:-0.12px">A</span><span style="font-size:9px;letter-spacing:0.00px;-webkit-text-stroke:0.08px currentColor;vertical-align:0.6px">测试</span></div>
<div class="a" style="left:165px;top:159.84px;white-space:nowrap;line-height:12px;color:#333"><span style="font-size:9px;letter-spacing:0.00px;-webkit-text-stroke:0.08px currentColor;vertical-align:0.6px">未开始</span></div>
<div class="a" style="left:272px;top:159.84px;white-space:nowrap;line-height:12px;color:#333"><span style="font-size:9.7px;letter-spacing:-0.12px">2023-10-24</span></div>
<div class="a" style="left:595.5px;top:159.84px;white-space:nowrap;line-height:12px;color:#333"><span style="font-size:9.7px;letter-spacing:-0.12px">0216</span><span style="font-size:9px;letter-spacing:0.00px;-webkit-text-stroke:0.08px currentColor;vertical-align:0.6px">测试自定义对</span><span style="font-size:9.7px;letter-spacing:-0.12px">...</span></div>
<div class="a" style="left:703px;top:159.84px;white-space:nowrap;line-height:12px;color:#2f74c8"><span style="font-size:9.7px;letter-spacing:-0.12px">0000028</span></div>
<div class="a" style="left:0;top:200.78px;width:803px;height:1px;background:#f0f0f0"></div>
<div class="a" style="left:31.80px;top:182.26px;white-space:nowrap;line-height:12px;color:#444"><span style="font-size:9.7px;letter-spacing:-0.12px">9</span></div>
<div class="a" style="left:58px;top:182.26px;white-space:nowrap;line-height:12px;color:#2f74c8"><span style="font-size:9.7px;letter-spacing:-0.12px">AAA</span><span style="font-size:9px;letter-spacing:0.00px;-webkit-text-stroke:0.08px currentColor;vertical-align:0.6px">测试</span></div>
<div class="a" style="left:165px;top:182.26px;white-space:nowrap;line-height:12px;color:#333"><span style="font-size:9px;letter-spacing:0.00px;-webkit-text-stroke:0.08px currentColor;vertical-align:0.6px">未开始</span></div>
<div class="a" style="left:272px;top:182.26px;white-space:nowrap;line-height:12px;color:#333"><span style="font-size:9.7px;letter-spacing:-0.12px">2023-10-10</span></div>
<div class="a" style="left:595.5px;top:182.26px;white-space:nowrap;line-height:12px;color:#333"><span style="font-size:9.7px;letter-spacing:-0.12px">0216</span><span style="font-size:9px;letter-spacing:0.00px;-webkit-text-stroke:0.08px currentColor;vertical-align:0.6px">测试自定义对</span><span style="font-size:9.7px;letter-spacing:-0.12px">...</span></div>
<div class="a" style="left:703px;top:182.26px;white-space:nowrap;line-height:12px;color:#2f74c8"><span style="font-size:9.7px;letter-spacing:-0.12px">0000028</span></div>
<div class="a" style="left:0;top:223.20px;width:803px;height:1px;background:#f0f0f0"></div>
<div class="a" style="left:29.10px;top:204.68px;white-space:nowrap;line-height:12px;color:#444"><span style="font-size:9.7px;letter-spacing:-0.12px">10</span></div>
<div class="a" style="left:58px;top:204.68px;white-space:nowrap;line-height:12px;color:#2f74c8"><span style="font-size:9.7px;letter-spacing:-0.12px">A</span><span style="font-size:9px;letter-spacing:0.00px;-webkit-text-stroke:0.08px currentColor;vertical-align:0.6px">测试</span></div>
<div class="a" style="left:165px;top:204.68px;white-space:nowrap;line-height:12px;color:#333"><span style="font-size:9px;letter-spacing:0.00px;-webkit-text-stroke:0.08px currentColor;vertical-align:0.6px">未开始</span></div>
<div class="a" style="left:272px;top:204.68px;white-space:nowrap;line-height:12px;color:#333"><span style="font-size:9.7px;letter-spacing:-0.12px">2023-10-10</span></div>
<div class="a" style="left:595.5px;top:204.68px;white-space:nowrap;line-height:12px;color:#333"><span style="font-size:9.7px;letter-spacing:-0.12px">0216</span><span style="font-size:9px;letter-spacing:0.00px;-webkit-text-stroke:0.08px currentColor;vertical-align:0.6px">测试自定义对</span><span style="font-size:9.7px;letter-spacing:-0.12px">...</span></div>
<div class="a" style="left:703px;top:204.68px;white-space:nowrap;line-height:12px;color:#2f74c8"><span style="font-size:9.7px;letter-spacing:-0.12px">0000028</span></div>
<div class="a" style="left:0;top:245.62px;width:803px;height:1px;background:#f0f0f0"></div>
<div class="a" style="left:29.10px;top:227.10px;white-space:nowrap;line-height:12px;color:#444"><span style="font-size:9.7px;letter-spacing:-0.12px">11</span></div>
<div class="a" style="left:58px;top:227.10px;white-space:nowrap;line-height:12px;color:#2f74c8"><span style="font-size:9.7px;letter-spacing:-0.12px">AAA</span><span style="font-size:9px;letter-spacing:0.00px;-webkit-text-stroke:0.08px currentColor;vertical-align:0.6px">测试</span></div>
<div class="a" style="left:165px;top:227.10px;white-space:nowrap;line-height:12px;color:#333"><span style="font-size:9px;letter-spacing:0.00px;-webkit-text-stroke:0.08px currentColor;vertical-align:0.6px">进行中</span></div>
<div class="a" style="left:272px;top:227.10px;white-space:nowrap;line-height:12px;color:#333"><span style="font-size:9.7px;letter-spacing:-0.12px">2023-10-08</span></div>
<div class="a" style="left:595.5px;top:227.10px;white-space:nowrap;line-height:12px;color:#333"><span style="font-size:9.7px;letter-spacing:-0.12px">0216</span><span style="font-size:9px;letter-spacing:0.00px;-webkit-text-stroke:0.08px currentColor;vertical-align:0.6px">测试自定义对</span><span style="font-size:9.7px;letter-spacing:-0.12px">...</span></div>
<div class="a" style="left:703px;top:227.10px;white-space:nowrap;line-height:12px;color:#2f74c8"><span style="font-size:9.7px;letter-spacing:-0.12px">0000028</span></div>
<div class="a" style="left:0;top:268.04px;width:803px;height:1px;background:#f0f0f0"></div>
<div class="a" style="left:29.10px;top:249.52px;white-space:nowrap;line-height:12px;color:#444"><span style="font-size:9.7px;letter-spacing:-0.12px">12</span></div>
<div class="a" style="left:58px;top:249.52px;white-space:nowrap;line-height:12px;color:#2f74c8"><span style="font-size:9.7px;letter-spacing:-0.12px">A</span><span style="font-size:9px;letter-spacing:0.00px;-webkit-text-stroke:0.08px currentColor;vertical-align:0.6px">测试</span></div>
<div class="a" style="left:165px;top:249.52px;white-space:nowrap;line-height:12px;color:#333"><span style="font-size:9px;letter-spacing:0.00px;-webkit-text-stroke:0.08px currentColor;vertical-align:0.6px">未开始</span></div>
<div class="a" style="left:272px;top:249.52px;white-space:nowrap;line-height:12px;color:#333"><span style="font-size:9.7px;letter-spacing:-0.12px">2023-10-08</span></div>
<div class="a" style="left:595.5px;top:249.52px;white-space:nowrap;line-height:12px;color:#333"><span style="font-size:9.7px;letter-spacing:-0.12px">0216</span><span style="font-size:9px;letter-spacing:0.00px;-webkit-text-stroke:0.08px currentColor;vertical-align:0.6px">测试自定义对</span><span style="font-size:9.7px;letter-spacing:-0.12px">...</span></div>
<div class="a" style="left:703px;top:249.52px;white-space:nowrap;line-height:12px;color:#2f74c8"><span style="font-size:9.7px;letter-spacing:-0.12px">0000028</span></div>
<div class="a" style="left:0;top:290.46px;width:803px;height:1px;background:#f0f0f0"></div>
<div class="a" style="left:29.10px;top:271.94px;white-space:nowrap;line-height:12px;color:#444"><span style="font-size:9.7px;letter-spacing:-0.12px">13</span></div>
<div class="a" style="left:58px;top:271.94px;white-space:nowrap;line-height:12px;color:#2f74c8"><span style="font-size:9px;letter-spacing:0.00px;-webkit-text-stroke:0.08px currentColor;vertical-align:0.6px">打电话</span></div>
<div class="a" style="left:165px;top:271.94px;white-space:nowrap;line-height:12px;color:#333"><span style="font-size:9px;letter-spacing:0.00px;-webkit-text-stroke:0.08px currentColor;vertical-align:0.6px">未开始</span></div>
<div class="a" style="left:272px;top:271.94px;white-space:nowrap;line-height:12px;color:#333"><span style="font-size:9.7px;letter-spacing:-0.12px">2023-09-28</span></div>
<div class="a" style="left:595.5px;top:271.94px;white-space:nowrap;line-height:12px;color:#333"><span style="font-size:9px;letter-spacing:0.00px;-webkit-text-stroke:0.08px currentColor;vertical-align:0.6px">报价单</span></div>
<div class="a" style="left:0;top:312.88px;width:803px;height:1px;background:#f0f0f0"></div>
<div class="a" style="left:29.10px;top:294.36px;white-space:nowrap;line-height:12px;color:#444"><span style="font-size:9.7px;letter-spacing:-0.12px">14</span></div>
<div class="a" style="left:58px;top:294.36px;white-space:nowrap;line-height:12px;color:#2f74c8"><span style="font-size:9.7px;letter-spacing:-0.12px">AAA</span><span style="font-size:9px;letter-spacing:0.00px;-webkit-text-stroke:0.08px currentColor;vertical-align:0.6px">测试</span></div>
<div class="a" style="left:165px;top:294.36px;white-space:nowrap;line-height:12px;color:#333"><span style="font-size:9px;letter-spacing:0.00px;-webkit-text-stroke:0.08px currentColor;vertical-align:0.6px">未开始</span></div>
<div class="a" style="left:272px;top:294.36px;white-space:nowrap;line-height:12px;color:#333"><span style="font-size:9.7px;letter-spacing:-0.12px">2023-09-26</span></div>
<div class="a" style="left:595.5px;top:294.36px;white-space:nowrap;line-height:12px;color:#333"><span style="font-size:9.7px;letter-spacing:-0.12px">0216</span><span style="font-size:9px;letter-spacing:0.00px;-webkit-text-stroke:0.08px currentColor;vertical-align:0.6px">测试自定义对</span><span style="font-size:9.7px;letter-spacing:-0.12px">...</span></div>
<div class="a" style="left:703px;top:294.36px;white-space:nowrap;line-height:12px;color:#2f74c8"><span style="font-size:9.7px;letter-spacing:-0.12px">0000028</span></div>
<div class="a" style="left:0;top:335.30px;width:803px;height:1px;background:#f0f0f0"></div>
<div class="a" style="left:29.10px;top:316.78px;white-space:nowrap;line-height:12px;color:#444"><span style="font-size:9.7px;letter-spacing:-0.12px">15</span></div>
<div class="a" style="left:58px;top:316.78px;white-space:nowrap;line-height:12px;color:#2f74c8"><span style="font-size:9.7px;letter-spacing:-0.12px">A</span><span style="font-size:9px;letter-spacing:0.00px;-webkit-text-stroke:0.08px currentColor;vertical-align:0.6px">测试</span></div>
<div class="a" style="left:165px;top:316.78px;white-space:nowrap;line-height:12px;color:#333"><span style="font-size:9px;letter-spacing:0.00px;-webkit-text-stroke:0.08px currentColor;vertical-align:0.6px">未开始</span></div>
<div class="a" style="left:272px;top:316.78px;white-space:nowrap;line-height:12px;color:#333"><span style="font-size:9.7px;letter-spacing:-0.12px">2023-09-26</span></div>
<div class="a" style="left:595.5px;top:316.78px;white-space:nowrap;line-height:12px;color:#333"><span style="font-size:9.7px;letter-spacing:-0.12px">0216</span><span style="font-size:9px;letter-spacing:0.00px;-webkit-text-stroke:0.08px currentColor;vertical-align:0.6px">测试自定义对</span><span style="font-size:9.7px;letter-spacing:-0.12px">...</span></div>
<div class="a" style="left:703px;top:316.78px;white-space:nowrap;line-height:12px;color:#2f74c8"><span style="font-size:9.7px;letter-spacing:-0.12px">0000028</span></div>
<div class="a" style="left:0;top:357.72px;width:803px;height:1px;background:#f0f0f0"></div>
<div class="a" style="left:29.10px;top:339.20px;white-space:nowrap;line-height:12px;color:#444"><span style="font-size:9.7px;letter-spacing:-0.12px">16</span></div>
<div class="a" style="left:58px;top:339.20px;white-space:nowrap;line-height:12px;color:#2f74c8"><span style="font-size:9px;letter-spacing:0.00px;-webkit-text-stroke:0.08px currentColor;vertical-align:0.6px">测试</span></div>
<div class="a" style="left:165px;top:339.20px;white-space:nowrap;line-height:12px;color:#333"><span style="font-size:9px;letter-spacing:0.00px;-webkit-text-stroke:0.08px currentColor;vertical-align:0.6px">未开始</span></div>
<div class="a" style="left:272px;top:339.20px;white-space:nowrap;line-height:12px;color:#333"><span style="font-size:9.7px;letter-spacing:-0.12px">2023-09-16</span></div>
<div class="a" style="left:595.5px;top:339.20px;white-space:nowrap;line-height:12px;color:#333"><span style="font-size:9.7px;letter-spacing:-0.12px">0216</span><span style="font-size:9px;letter-spacing:0.00px;-webkit-text-stroke:0.08px currentColor;vertical-align:0.6px">测试自定义对</span><span style="font-size:9.7px;letter-spacing:-0.12px">...</span></div>
<div class="a" style="left:703px;top:339.20px;white-space:nowrap;line-height:12px;color:#2f74c8"><span style="font-size:9.7px;letter-spacing:-0.12px">0000007</span></div>
<div class="a" style="left:0;top:380.14px;width:803px;height:1px;background:#f0f0f0"></div>
<div class="a" style="left:29.10px;top:361.62px;white-space:nowrap;line-height:12px;color:#444"><span style="font-size:9.7px;letter-spacing:-0.12px">17</span></div>
<div class="a" style="left:58px;top:361.62px;white-space:nowrap;line-height:12px;color:#2f74c8"><span style="font-size:9px;letter-spacing:0.00px;-webkit-text-stroke:0.08px currentColor;vertical-align:0.6px">测试</span></div>
<div class="a" style="left:165px;top:361.62px;white-space:nowrap;line-height:12px;color:#333"><span style="font-size:9px;letter-spacing:0.00px;-webkit-text-stroke:0.08px currentColor;vertical-align:0.6px">未开始</span></div>
<div class="a" style="left:272px;top:361.62px;white-space:nowrap;line-height:12px;color:#333"><span style="font-size:9.7px;letter-spacing:-0.12px">2023-09-16</span></div>
<div class="a" style="left:595.5px;top:361.62px;white-space:nowrap;line-height:12px;color:#333"><span style="font-size:9.7px;letter-spacing:-0.12px">0216</span><span style="font-size:9px;letter-spacing:0.00px;-webkit-text-stroke:0.08px currentColor;vertical-align:0.6px">测试自定义对</span><span style="font-size:9.7px;letter-spacing:-0.12px">...</span></div>
<div class="a" style="left:703px;top:361.62px;white-space:nowrap;line-height:12px;color:#2f74c8"><span style="font-size:9.7px;letter-spacing:-0.12px">0000006</span></div>
<div class="a" style="left:0;top:402.56px;width:803px;height:1px;background:#f0f0f0"></div>
<div class="a" style="left:29.10px;top:384.04px;white-space:nowrap;line-height:12px;color:#444"><span style="font-size:9.7px;letter-spacing:-0.12px">18</span></div>
<div class="a" style="left:58px;top:384.04px;white-space:nowrap;line-height:12px;color:#2f74c8"><span style="font-size:9px;letter-spacing:0.00px;-webkit-text-stroke:0.08px currentColor;vertical-align:0.6px">测试</span></div>
<div class="a" style="left:165px;top:384.04px;white-space:nowrap;line-height:12px;color:#333"><span style="font-size:9px;letter-spacing:0.00px;-webkit-text-stroke:0.08px currentColor;vertical-align:0.6px">未开始</span></div>
<div class="a" style="left:272px;top:384.04px;white-space:nowrap;line-height:12px;color:#333"><span style="font-size:9.7px;letter-spacing:-0.12px">2023-09-16</span></div>
<div class="a" style="left:595.5px;top:384.04px;white-space:nowrap;line-height:12px;color:#333"><span style="font-size:9.7px;letter-spacing:-0.12px">0216</span><span style="font-size:9px;letter-spacing:0.00px;-webkit-text-stroke:0.08px currentColor;vertical-align:0.6px">测试自定义对</span><span style="font-size:9.7px;letter-spacing:-0.12px">...</span></div>
<div class="a" style="left:703px;top:384.04px;white-space:nowrap;line-height:12px;color:#2f74c8"><span style="font-size:9.7px;letter-spacing:-0.12px">0000005</span></div>
<div class="a" style="left:0;top:424.98px;width:803px;height:1px;background:#f0f0f0"></div>
<div class="a" style="left:29.10px;top:406.46px;white-space:nowrap;line-height:12px;color:#444"><span style="font-size:9.7px;letter-spacing:-0.12px">19</span></div>
<div class="a" style="left:58px;top:406.46px;white-space:nowrap;line-height:12px;color:#2f74c8"><span style="font-size:9px;letter-spacing:0.00px;-webkit-text-stroke:0.08px currentColor;vertical-align:0.6px">测试</span></div>
<div class="a" style="left:165px;top:406.46px;white-space:nowrap;line-height:12px;color:#333"><span style="font-size:9px;letter-spacing:0.00px;-webkit-text-stroke:0.08px currentColor;vertical-align:0.6px">未开始</span></div>
<div class="a" style="left:272px;top:406.46px;white-space:nowrap;line-height:12px;color:#333"><span style="font-size:9.7px;letter-spacing:-0.12px">2023-09-16</span></div>
<div class="a" style="left:595.5px;top:406.46px;white-space:nowrap;line-height:12px;color:#333"><span style="font-size:9.7px;letter-spacing:-0.12px">0216</span><span style="font-size:9px;letter-spacing:0.00px;-webkit-text-stroke:0.08px currentColor;vertical-align:0.6px">测试自定义对</span><span style="font-size:9.7px;letter-spacing:-0.12px">...</span></div>
<div class="a" style="left:703px;top:406.46px;white-space:nowrap;line-height:12px;color:#2f74c8"><span style="font-size:9.7px;letter-spacing:-0.12px">0000004</span></div>
<div class="a" style="left:0;top:447.40px;width:803px;height:1px;background:#f0f0f0"></div>
<div class="a" style="left:29.10px;top:428.88px;white-space:nowrap;line-height:12px;color:#444"><span style="font-size:9.7px;letter-spacing:-0.12px">20</span></div>
<div class="a" style="left:58px;top:428.88px;white-space:nowrap;line-height:12px;color:#2f74c8"><span style="font-size:9px;letter-spacing:0.00px;-webkit-text-stroke:0.08px currentColor;vertical-align:0.6px">测试</span></div>
<div class="a" style="left:165px;top:428.88px;white-space:nowrap;line-height:12px;color:#333"><span style="font-size:9px;letter-spacing:0.00px;-webkit-text-stroke:0.08px currentColor;vertical-align:0.6px">未开始</span></div>
<div class="a" style="left:272px;top:428.88px;white-space:nowrap;line-height:12px;color:#333"><span style="font-size:9.7px;letter-spacing:-0.12px">2023-09-16</span></div>
<div class="a" style="left:595.5px;top:428.88px;white-space:nowrap;line-height:12px;color:#333"><span style="font-size:9.7px;letter-spacing:-0.12px">0216</span><span style="font-size:9px;letter-spacing:0.00px;-webkit-text-stroke:0.08px currentColor;vertical-align:0.6px">测试自定义对</span><span style="font-size:9.7px;letter-spacing:-0.12px">...</span></div>
<div class="a" style="left:703px;top:428.88px;white-space:nowrap;line-height:12px;color:#2f74c8"><span style="font-size:9.7px;letter-spacing:-0.12px">0000003</span></div>
<div class="a" style="left:0;top:469.82px;width:803px;height:1px;background:#f0f0f0"></div>
<div class="a" style="left:29.10px;top:451.30px;white-space:nowrap;line-height:12px;color:#444"><span style="font-size:9.7px;letter-spacing:-0.12px">21</span></div>
<div class="a" style="left:58px;top:451.30px;white-space:nowrap;line-height:12px;color:#2f74c8"><span style="font-size:9px;letter-spacing:0.00px;-webkit-text-stroke:0.08px currentColor;vertical-align:0.6px">测试</span></div>
<div class="a" style="left:165px;top:451.30px;white-space:nowrap;line-height:12px;color:#333"><span style="font-size:9px;letter-spacing:0.00px;-webkit-text-stroke:0.08px currentColor;vertical-align:0.6px">未开始</span></div>
<div class="a" style="left:272px;top:451.30px;white-space:nowrap;line-height:12px;color:#333"><span style="font-size:9.7px;letter-spacing:-0.12px">2023-09-16</span></div>
<div class="a" style="left:595.5px;top:451.30px;white-space:nowrap;line-height:12px;color:#333"><span style="font-size:9.7px;letter-spacing:-0.12px">0216</span><span style="font-size:9px;letter-spacing:0.00px;-webkit-text-stroke:0.08px currentColor;vertical-align:0.6px">测试自定义对</span><span style="font-size:9.7px;letter-spacing:-0.12px">...</span></div>
<div class="a" style="left:703px;top:451.30px;white-space:nowrap;line-height:12px;color:#2f74c8"><span style="font-size:9.7px;letter-spacing:-0.12px">0000002</span></div>
<div class="a" style="left:0;top:492.24px;width:803px;height:1px;background:#f0f0f0"></div>
<div class="a" style="left:29.10px;top:473.72px;white-space:nowrap;line-height:12px;color:#444"><span style="font-size:9.7px;letter-spacing:-0.12px">22</span></div>
<div class="a" style="left:58px;top:473.72px;white-space:nowrap;line-height:12px;color:#2f74c8"><span style="font-size:9px;letter-spacing:0.00px;-webkit-text-stroke:0.08px currentColor;vertical-align:0.6px">测试</span></div>
<div class="a" style="left:165px;top:473.72px;white-space:nowrap;line-height:12px;color:#333"><span style="font-size:9px;letter-spacing:0.00px;-webkit-text-stroke:0.08px currentColor;vertical-align:0.6px">未开始</span></div>
<div class="a" style="left:272px;top:473.72px;white-space:nowrap;line-height:12px;color:#333"><span style="font-size:9.7px;letter-spacing:-0.12px">2023-09-16</span></div>
<div class="a" style="left:595.5px;top:473.72px;white-space:nowrap;line-height:12px;color:#333"><span style="font-size:9.7px;letter-spacing:-0.12px">0216</span><span style="font-size:9px;letter-spacing:0.00px;-webkit-text-stroke:0.08px currentColor;vertical-align:0.6px">测试自定义对</span><span style="font-size:9.7px;letter-spacing:-0.12px">...</span></div>
<div class="a" style="left:703px;top:473.72px;white-space:nowrap;line-height:12px;color:#2f74c8"><span style="font-size:9.7px;letter-spacing:-0.12px">0000001</span></div>
</div>
<div class="a" style="left:24.3px;top:567px;width:803px;height:0.8px;background:#ececec"></div>
<div class="a" style="left:30.9px;top:573.2px;white-space:nowrap;line-height:12px;color:#333;"><span style="font-size:9px;letter-spacing:0.00px;-webkit-text-stroke:0.1px currentColor;vertical-align:0.6px">共</span><span style="font-size:9.7px;letter-spacing:-0.12px">526</span><span style="font-size:9px;letter-spacing:0.00px;-webkit-text-stroke:0.1px currentColor;vertical-align:0.6px">条数据</span></div>
<div class="a" style="left:552px;top:573.3px;width:13.3px;height:13.8px;background:#f4f4f5;border-radius:1.5px;color:#c0c4cc;font-size:8.6px;font-weight:bold;text-align:center;line-height:13.8px;padding-top:1.2px"></div>
<div class="a" style="left:569.4px;top:573.3px;width:13.6px;height:13.8px;background:#2f6cf6;border-radius:1.5px;color:#fff;font-size:8.6px;font-weight:bold;text-align:center;line-height:13.8px;padding-top:1.2px">1</div>
<div class="a" style="left:587.1px;top:573.3px;width:13.5px;height:13.8px;background:#f4f4f5;border-radius:1.5px;color:#333;font-size:8.6px;font-weight:bold;text-align:center;line-height:13.8px;padding-top:1.2px">2</div>
<div class="a" style="left:604.8px;top:573.3px;width:13.3px;height:13.8px;background:#f4f4f5;border-radius:1.5px;color:#333;font-size:8.6px;font-weight:bold;text-align:center;line-height:13.8px;padding-top:1.2px">3</div>
<div class="a" style="left:622.2px;top:573.3px;width:13.3px;height:13.8px;background:#f4f4f5;border-radius:1.5px;color:#333;font-size:8.6px;font-weight:bold;text-align:center;line-height:13.8px;padding-top:1.2px">4</div>
<div class="a" style="left:640px;top:573.3px;width:13px;height:13.8px;background:#f4f4f5;border-radius:1.5px;color:#333;font-size:8.6px;font-weight:bold;text-align:center;line-height:13.8px;padding-top:2.2px">···</div>
<div class="a" style="left:657.4px;top:573.3px;width:13.6px;height:13.8px;background:#f4f4f5;border-radius:1.5px;color:#333;font-size:8.6px;font-weight:bold;text-align:center;line-height:13.8px;padding-top:1.2px">22</div>
<div class="a" style="left:675.5px;top:573.3px;width:13.5px;height:13.8px;background:#f4f4f5;border-radius:1.5px;color:#333;font-size:8.6px;font-weight:bold;text-align:center;line-height:13.8px;padding-top:1.2px"></div>
<svg class="a" style="left:552px;top:573.3px" width="40" height="14" fill="none" stroke="#c0c4cc" stroke-width="0.9"><path d="M7.6 4.3 l-2.4 2.6 l2.4 2.6"/></svg>
<svg class="a" style="left:675.5px;top:573.3px" width="14" height="14" fill="none" stroke="#555" stroke-width="0.9"><path d="M5.8 4.3 l2.4 2.6 l-2.4 2.6"/></svg>
<div class="a" style="left:693.9px;top:574.2px;width:62.50px;height:13.40px;border:1px solid #e0e0e0;border-radius:2px;background:#fff"></div>
<div class="a" style="left:705.8px;top:573.3px;white-space:nowrap;line-height:12px;color:#555;"><span style="font-size:8.6px;letter-spacing:-0.1px">25</span><span style="font-size:8px;letter-spacing:0.00px;-webkit-text-stroke:0px currentColor;vertical-align:0.6px">条</span><span style="font-size:8.6px;letter-spacing:-0.1px">/</span><span style="font-size:8px;letter-spacing:0.00px;-webkit-text-stroke:0px currentColor;vertical-align:0.6px">页</span></div>
<svg class="a" style="left:745px;top:578px" width="8" height="6" fill="none" stroke="#c0c4cc" stroke-width="0.8"><path d="M1 1 l2.8 2.8 l2.8 -2.8"/></svg>
<div class="a" style="left:766.2px;top:573.6px;white-space:nowrap;line-height:12px;color:#555;"><span style="font-size:8px;letter-spacing:0.00px;-webkit-text-stroke:0px currentColor;vertical-align:0.6px">前往</span></div>
<div class="a" style="left:785.3px;top:574.2px;width:28.00px;height:13.40px;border:1px solid #e0e0e0;border-radius:2px;background:#fff"></div>
<div class="a" style="left:797px;top:573.2px;white-space:nowrap;line-height:12px;color:#555;"><span style="font-size:8.6px;letter-spacing:-0.12px">1</span></div>
<div class="a" style="left:815.6px;top:573.5px;white-space:nowrap;line-height:12px;color:#555;"><span style="font-size:9px;letter-spacing:0.00px;-webkit-text-stroke:0px currentColor;vertical-align:0.6px">页</span></div>
<div class="a" style="left:24.3px;top:593.2px;width:809.7px;height:1.8px;background:#e2e2e2"></div>
<svg class="a" style="left:31.5px;top:603.5px" width="11" height="11"><path d="M5.3 0.9 a4.3 4.3 0 1 1 -2.6 7.8 l-2 0.8 l0.6 -2.1 a4.3 4.3 0 0 1 4 -6.5 z" fill="#1f1f24"/><rect x="3.8" y="3.7" width="3" height="3" fill="#8a8a94"/></svg>
<div class="a" style="left:47.6px;top:602.2px;white-space:nowrap;line-height:12px;color:#555;"><span style="font-size:9px;letter-spacing:0.00px;-webkit-text-stroke:0.05px currentColor;vertical-align:0.6px">群策</span></div>
<svg class="a" style="left:0;top:0;mix-blend-mode:multiply" width="834" height="618"><clipPath id="wmc"><rect x="25" y="63" width="809" height="555"/></clipPath><g clip-path="url(#wmc)" fill="#f0f0f0" font-family="Liberation Sans,sans-serif"><g transform="translate(85,43) rotate(-40)"><text x="-30" y="-2" font-size="7">uat管理员账号test</text><text x="-30" y="7" font-size="7">00520186EC873D4AAd0</text></g><g transform="translate(85,108) rotate(-40)"><text x="-30" y="-2" font-size="7">uat管理员账号test</text><text x="-30" y="7" font-size="7">00520186EC873D4AAd0</text></g><g transform="translate(85,173) rotate(-40)"><text x="-30" y="-2" font-size="7">uat管理员账号test</text><text x="-30" y="7" font-size="7">00520186EC873D4AAd0</text></g><g transform="translate(85,238) rotate(-40)"><text x="-30" y="-2" font-size="7">uat管理员账号test</text><text x="-30" y="7" font-size="7">00520186EC873D4AAd0</text></g><g transform="translate(85,303) rotate(-40)"><text x="-30" y="-2" font-size="7">uat管理员账号test</text><text x="-30" y="7" font-size="7">00520186EC873D4AAd0</text></g><g transform="translate(85,368) rotate(-40)"><text x="-30" y="-2" font-size="7">uat管理员账号test</text><text x="-30" y="7" font-size="7">00520186EC873D4AAd0</text></g><g transform="translate(85,433) rotate(-40)"><text x="-30" y="-2" font-size="7">uat管理员账号test</text><text x="-30" y="7" font-size="7">00520186EC873D4AAd0</text></g><g transform="translate(85,498) rotate(-40)"><text x="-30" y="-2" font-size="7">uat管理员账号test</text><text x="-30" y="7" font-size="7">00520186EC873D4AAd0</text></g><g transform="translate(85,563) rotate(-40)"><text x="-30" y="-2" font-size="7">uat管理员账号test</text><text x="-30" y="7" font-size="7">00520186EC873D4AAd0</text></g><g transform="translate(85,628) rotate(-40)"><text x="-30" y="-2" font-size="7">uat管理员账号test</text><text x="-30" y="7" font-size="7">00520186EC873D4AAd0</text></g><g transform="translate(216,43) rotate(-40)"><text x="-30" y="-2" font-size="7">uat管理员账号test</text><text x="-30" y="7" font-size="7">00520186EC873D4AAd0</text></g><g transform="translate(216,108) rotate(-40)"><text x="-30" y="-2" font-size="7">uat管理员账号test</text><text x="-30" y="7" font-size="7">00520186EC873D4AAd0</text></g><g transform="translate(216,173) rotate(-40)"><text x="-30" y="-2" font-size="7">uat管理员账号test</text><text x="-30" y="7" font-size="7">00520186EC873D4AAd0</text></g><g transform="translate(216,238) rotate(-40)"><text x="-30" y="-2" font-size="7">uat管理员账号test</text><text x="-30" y="7" font-size="7">00520186EC873D4AAd0</text></g><g transform="translate(216,303) rotate(-40)"><text x="-30" y="-2" font-size="7">uat管理员账号test</text><text x="-30" y="7" font-size="7">00520186EC873D4AAd0</text></g><g transform="translate(216,368) rotate(-40)"><text x="-30" y="-2" font-size="7">uat管理员账号test</text><text x="-30" y="7" font-size="7">00520186EC873D4AAd0</text></g><g transform="translate(216,433) rotate(-40)"><text x="-30" y="-2" font-size="7">uat管理员账号test</text><text x="-30" y="7" font-size="7">00520186EC873D4AAd0</text></g><g transform="translate(216,498) rotate(-40)"><text x="-30" y="-2" font-size="7">uat管理员账号test</text><text x="-30" y="7" font-size="7">00520186EC873D4AAd0</text></g><g transform="translate(216,563) rotate(-40)"><text x="-30" y="-2" font-size="7">uat管理员账号test</text><text x="-30" y="7" font-size="7">00520186EC873D4AAd0</text></g><g transform="translate(216,628) rotate(-40)"><text x="-30" y="-2" font-size="7">uat管理员账号test</text><text x="-30" y="7" font-size="7">00520186EC873D4AAd0</text></g><g transform="translate(347,43) rotate(-40)"><text x="-30" y="-2" font-size="7">uat管理员账号test</text><text x="-30" y="7" font-size="7">00520186EC873D4AAd0</text></g><g transform="translate(347,108) rotate(-40)"><text x="-30" y="-2" font-size="7">uat管理员账号test</text><text x="-30" y="7" font-size="7">00520186EC873D4AAd0</text></g><g transform="translate(347,173) rotate(-40)"><text x="-30" y="-2" font-size="7">uat管理员账号test</text><text x="-30" y="7" font-size="7">00520186EC873D4AAd0</text></g><g transform="translate(347,238) rotate(-40)"><text x="-30" y="-2" font-size="7">uat管理员账号test</text><text x="-30" y="7" font-size="7">00520186EC873D4AAd0</text></g><g transform="translate(347,303) rotate(-40)"><text x="-30" y="-2" font-size="7">uat管理员账号test</text><text x="-30" y="7" font-size="7">00520186EC873D4AAd0</text></g><g transform="translate(347,368) rotate(-40)"><text x="-30" y="-2" font-size="7">uat管理员账号test</text><text x="-30" y="7" font-size="7">00520186EC873D4AAd0</text></g><g transform="translate(347,433) rotate(-40)"><text x="-30" y="-2" font-size="7">uat管理员账号test</text><text x="-30" y="7" font-size="7">00520186EC873D4AAd0</text></g><g transform="translate(347,498) rotate(-40)"><text x="-30" y="-2" font-size="7">uat管理员账号test</text><text x="-30" y="7" font-size="7">00520186EC873D4AAd0</text></g><g transform="translate(347,563) rotate(-40)"><text x="-30" y="-2" font-size="7">uat管理员账号test</text><text x="-30" y="7" font-size="7">00520186EC873D4AAd0</text></g><g transform="translate(347,628) rotate(-40)"><text x="-30" y="-2" font-size="7">uat管理员账号test</text><text x="-30" y="7" font-size="7">00520186EC873D4AAd0</text></g><g transform="translate(478,43) rotate(-40)"><text x="-30" y="-2" font-size="7">uat管理员账号test</text><text x="-30" y="7" font-size="7">00520186EC873D4AAd0</text></g><g transform="translate(478,108) rotate(-40)"><text x="-30" y="-2" font-size="7">uat管理员账号test</text><text x="-30" y="7" font-size="7">00520186EC873D4AAd0</text></g><g transform="translate(478,173) rotate(-40)"><text x="-30" y="-2" font-size="7">uat管理员账号test</text><text x="-30" y="7" font-size="7">00520186EC873D4AAd0</text></g><g transform="translate(478,238) rotate(-40)"><text x="-30" y="-2" font-size="7">uat管理员账号test</text><text x="-30" y="7" font-size="7">00520186EC873D4AAd0</text></g><g transform="translate(478,303) rotate(-40)"><text x="-30" y="-2" font-size="7">uat管理员账号test</text><text x="-30" y="7" font-size="7">00520186EC873D4AAd0</text></g><g transform="translate(478,368) rotate(-40)"><text x="-30" y="-2" font-size="7">uat管理员账号test</text><text x="-30" y="7" font-size="7">00520186EC873D4AAd0</text></g><g transform="translate(478,433) rotate(-40)"><text x="-30" y="-2" font-size="7">uat管理员账号test</text><text x="-30" y="7" font-size="7">00520186EC873D4AAd0</text></g><g transform="translate(478,498) rotate(-40)"><text x="-30" y="-2" font-size="7">uat管理员账号test</text><text x="-30" y="7" font-size="7">00520186EC873D4AAd0</text></g><g transform="translate(478,563) rotate(-40)"><text x="-30" y="-2" font-size="7">uat管理员账号test</text><text x="-30" y="7" font-size="7">00520186EC873D4AAd0</text></g><g transform="translate(478,628) rotate(-40)"><text x="-30" y="-2" font-size="7">uat管理员账号test</text><text x="-30" y="7" font-size="7">00520186EC873D4AAd0</text></g><g transform="translate(609,43) rotate(-40)"><text x="-30" y="-2" font-size="7">uat管理员账号test</text><text x="-30" y="7" font-size="7">00520186EC873D4AAd0</text></g><g transform="translate(609,108) rotate(-40)"><text x="-30" y="-2" font-size="7">uat管理员账号test</text><text x="-30" y="7" font-size="7">00520186EC873D4AAd0</text></g><g transform="translate(609,173) rotate(-40)"><text x="-30" y="-2" font-size="7">uat管理员账号test</text><text x="-30" y="7" font-size="7">00520186EC873D4AAd0</text></g><g transform="translate(609,238) rotate(-40)"><text x="-30" y="-2" font-size="7">uat管理员账号test</text><text x="-30" y="7" font-size="7">00520186EC873D4AAd0</text></g><g transform="translate(609,303) rotate(-40)"><text x="-30" y="-2" font-size="7">uat管理员账号test</text><text x="-30" y="7" font-size="7">00520186EC873D4AAd0</text></g><g transform="translate(609,368) rotate(-40)"><text x="-30" y="-2" font-size="7">uat管理员账号test</text><text x="-30" y="7" font-size="7">00520186EC873D4AAd0</text></g><g transform="translate(609,433) rotate(-40)"><text x="-30" y="-2" font-size="7">uat管理员账号test</text><text x="-30" y="7" font-size="7">00520186EC873D4AAd0</text></g><g transform="translate(609,498) rotate(-40)"><text x="-30" y="-2" font-size="7">uat管理员账号test</text><text x="-30" y="7" font-size="7">00520186EC873D4AAd0</text></g><g transform="translate(609,563) rotate(-40)"><text x="-30" y="-2" font-size="7">uat管理员账号test</text><text x="-30" y="7" font-size="7">00520186EC873D4AAd0</text></g><g transform="translate(609,628) rotate(-40)"><text x="-30" y="-2" font-size="7">uat管理员账号test</text><text x="-30" y="7" font-size="7">00520186EC873D4AAd0</text></g><g transform="translate(740,43) rotate(-40)"><text x="-30" y="-2" font-size="7">uat管理员账号test</text><text x="-30" y="7" font-size="7">00520186EC873D4AAd0</text></g><g transform="translate(740,108) rotate(-40)"><text x="-30" y="-2" font-size="7">uat管理员账号test</text><text x="-30" y="7" font-size="7">00520186EC873D4AAd0</text></g><g transform="translate(740,173) rotate(-40)"><text x="-30" y="-2" font-size="7">uat管理员账号test</text><text x="-30" y="7" font-size="7">00520186EC873D4AAd0</text></g><g transform="translate(740,238) rotate(-40)"><text x="-30" y="-2" font-size="7">uat管理员账号test</text><text x="-30" y="7" font-size="7">00520186EC873D4AAd0</text></g><g transform="translate(740,303) rotate(-40)"><text x="-30" y="-2" font-size="7">uat管理员账号test</text><text x="-30" y="7" font-size="7">00520186EC873D4AAd0</text></g><g transform="translate(740,368) rotate(-40)"><text x="-30" y="-2" font-size="7">uat管理员账号test</text><text x="-30" y="7" font-size="7">00520186EC873D4AAd0</text></g><g transform="translate(740,433) rotate(-40)"><text x="-30" y="-2" font-size="7">uat管理员账号test</text><text x="-30" y="7" font-size="7">00520186EC873D4AAd0</text></g><g transform="translate(740,498) rotate(-40)"><text x="-30" y="-2" font-size="7">uat管理员账号test</text><text x="-30" y="7" font-size="7">00520186EC873D4AAd0</text></g><g transform="translate(740,563) rotate(-40)"><text x="-30" y="-2" font-size="7">uat管理员账号test</text><text x="-30" y="7" font-size="7">00520186EC873D4AAd0</text></g><g transform="translate(740,628) rotate(-40)"><text x="-30" y="-2" font-size="7">uat管理员账号test</text><text x="-30" y="7" font-size="7">00520186EC873D4AAd0</text></g><g transform="translate(871,43) rotate(-40)"><text x="-30" y="-2" font-size="7">uat管理员账号test</text><text x="-30" y="7" font-size="7">00520186EC873D4AAd0</text></g><g transform="translate(871,108) rotate(-40)"><text x="-30" y="-2" font-size="7">uat管理员账号test</text><text x="-30" y="7" font-size="7">00520186EC873D4AAd0</text></g><g transform="translate(871,173) rotate(-40)"><text x="-30" y="-2" font-size="7">uat管理员账号test</text><text x="-30" y="7" font-size="7">00520186EC873D4AAd0</text></g><g transform="translate(871,238) rotate(-40)"><text x="-30" y="-2" font-size="7">uat管理员账号test</text><text x="-30" y="7" font-size="7">00520186EC873D4AAd0</text></g><g transform="translate(871,303) rotate(-40)"><text x="-30" y="-2" font-size="7">uat管理员账号test</text><text x="-30" y="7" font-size="7">00520186EC873D4AAd0</text></g><g transform="translate(871,368) rotate(-40)"><text x="-30" y="-2" font-size="7">uat管理员账号test</text><text x="-30" y="7" font-size="7">00520186EC873D4AAd0</text></g><g transform="translate(871,433) rotate(-40)"><text x="-30" y="-2" font-size="7">uat管理员账号test</text><text x="-30" y="7" font-size="7">00520186EC873D4AAd0</text></g><g transform="translate(871,498) rotate(-40)"><text x="-30" y="-2" font-size="7">uat管理员账号test</text><text x="-30" y="7" font-size="7">00520186EC873D4AAd0</text></g><g transform="translate(871,563) rotate(-40)"><text x="-30" y="-2" font-size="7">uat管理员账号test</text><text x="-30" y="7" font-size="7">00520186EC873D4AAd0</text></g><g transform="translate(871,628) rotate(-40)"><text x="-30" y="-2" font-size="7">uat管理员账号test</text><text x="-30" y="7" font-size="7">00520186EC873D4AAd0</text></g></g></svg>
<div class="a" style="left:37.9px;top:33.2px;width:19.2px;height:19.7px;background:#c3dcb2"></div>
<div class="a" style="left:57.1px;top:33.2px;width:4.9px;height:19.7px;background:#f7ca94"></div>
<div class="a" style="left:43.9px;top:38.9px;width:7.7px;height:8.8px;background:#a9c9ec"></div>
<svg class="a" style="left:43px;top:38.5px" width="10" height="10"><path d="M6.4 2 A3.3 3.3 0 1 0 7.8 4.6" fill="none" stroke="#4a78b8" stroke-width="0.9"/><path d="M5.6 0.6 l2.6 1.4 l-2 1.8 z" fill="#4a78b8"/></svg>
<div class="a" style="left:37.7px;top:58.7px;width:188px;height:40.3px;background:#fff;border-radius:3px;box-shadow:0 1px 4px rgba(0,0,0,0.25)"></div>
<div class="a" style="left:45.5px;top:55.5px;width:7px;height:7px;background:#fff;transform:rotate(45deg);box-shadow:-1px -1px 1px rgba(0,0,0,0.08)"></div>
<div class="a" style="left:43.5px;top:63px;font-size:8.26px;font-weight:bold;color:#1a1aa6;white-space:nowrap;line-height:11px"><span style="color:#881280">button</span>.el-button.refreshBtn.button</div>
<div class="a" style="left:43.5px;top:74px;font-size:8.26px;font-weight:bold;color:#1a1aa6;white-space:nowrap;line-height:11px">Class.refresh-btn.el-button--defaul</div>
<div class="a" style="left:43.5px;top:85px;font-size:8.26px;font-weight:bold;color:#1a1aa6;white-space:nowrap;line-height:11px">t.el-button--sma...</div>
<div class="a" style="left:188.4px;top:74px;font-size:8.1px;color:#999;white-space:nowrap;line-height:11px">31.6 × 32</div>
<div class="a" style="left:28.3px;top:26.9px;width:39.4px;height:32.6px;border:2.7px solid #e8101a"></div>
<div id="dt" class="a"></div>
<div class="a" style="left:835px;top:0;width:445px;height:13px;background:#3c3c3c;border-bottom:1px solid #4a4a4a"></div>
<div class="a" style="left:889.7px;top:-3.2px;color:#c4c7c5;white-space:nowrap;line-height:12px"><span style="font-size:9px;letter-spacing:-0.45px;-webkit-text-stroke:0.12px currentColor;vertical-align:0px">网络</span></div>
<div class="a" style="left:922.7px;top:-3.2px;color:#c4c7c5;white-space:nowrap;line-height:12px"><span style="font-size:9px;letter-spacing:-0.45px;-webkit-text-stroke:0.12px currentColor;vertical-align:0px">控制台</span></div>
<div class="a" style="left:963px;top:-3.2px;color:#c4c7c5;white-space:nowrap;line-height:12px"><span style="font-size:9px;letter-spacing:-0.45px;-webkit-text-stroke:0.12px currentColor;vertical-align:0px">应用</span></div>
<div class="a" style="left:995.7px;top:-3.2px;color:#a8c7fa;white-space:nowrap;line-height:12px"><span style="font-size:9px;letter-spacing:-0.45px;-webkit-text-stroke:0.12px currentColor;vertical-align:0px">元素</span></div>
<div class="a" style="left:1027.5px;top:-3.2px;color:#c4c7c5;white-space:nowrap;line-height:12px"><span style="font-size:9px;letter-spacing:-0.45px;-webkit-text-stroke:0.12px currentColor;vertical-align:0px">源代码</span><span style="font-size:8.6px;letter-spacing:0px">/</span><span style="font-size:9px;letter-spacing:-0.45px;-webkit-text-stroke:0.12px currentColor;vertical-align:0px">来源</span></div>
<div class="a" style="left:1088px;top:-3.2px;color:#c4c7c5;white-space:nowrap;line-height:12px"><span style="font-size:9px;letter-spacing:-0.45px;-webkit-text-stroke:0.12px currentColor;vertical-align:0px">性能</span></div>
<div class="a" style="left:988px;top:11.5px;width:33px;height:1.5px;background:#7cacf8"></div>
<svg class="a" style="left:835px;top:0" width="445" height="13">
<g fill="none" stroke="#c4c7c5" stroke-width="1">
<path d="M6.5 0.5 v8.5 h3.5" stroke-dasharray="1 1.1"/>
<path d="M11 4 l4.5 4.5" stroke-width="1.3"/><path d="M9.8 2.6 h4.2 l-4.2 4.2 z" fill="#c4c7c5" stroke="none"/>
<path d="M26 2.5 v7 M24 9.5 h7 M28 3 h0"/>
<rect x="31.5" y="4.5" width="3.5" height="5" rx="1"/>
</g>
<rect x="43" y="1" width="1" height="10" fill="#4a4a4a"/>
<g fill="none" stroke="#c4c7c5" stroke-width="1"><path d="M280 2.5 l3 3 l-3 3 M284 2.5 l3 3 l-3 3"/></g>
<circle cx="313.6" cy="5.2" r="3.9" fill="#e46962"/>
<path d="M312 3.6 l3.2 3.2 M315.2 3.6 l-3.2 3.2" stroke="#3c3c3c" stroke-width="0.9"/>
<path d="M333.8 1.2 l4.2 7.6 h-8.4 z" fill="#f5a623"/>
<path d="M357.5 2 h6.5 v4.5 h-4 l-2.5 2 z" fill="#7cacf8"/>
<rect x="383" y="1" width="1" height="10" fill="#4a4a4a"/>
<g fill="none" stroke="#c4c7c5" stroke-width="1"><circle cx="394" cy="5" r="1.7"/><path d="M394 0.8 l1.2 1.1 l1.7 -0.3 l0.4 1.6 l1.4 0.9 l-0.6 1.6 l0.6 1.6 l-1.4 0.9 l-0.4 1.6 l-1.7 -0.3 l-1.2 1.1 l-1.2 -1.1 l-1.7 0.3 l-0.4 -1.6 l-1.4 -0.9 l0.6 -1.6 l-0.6 -1.6 l1.4 -0.9 l0.4 -1.6 l1.7 0.3 z"/></g>
<g fill="#c4c7c5"><circle cx="414" cy="1.5" r="0.8"/><circle cx="414" cy="5" r="0.8"/><circle cx="414" cy="8.5" r="0.8"/></g>
<path d="M428.5 1.5 l7 7 M435.5 1.5 l-7 7" stroke="#c4c7c5" stroke-width="1"/>
</svg>
<div class="a" style="left:1156.5px;top:-1px;font-size:8.5px;color:#c4c7c5;line-height:12px">1</div>
<div class="a" style="left:1175.5px;top:-1px;font-size:8.5px;color:#c4c7c5;line-height:12px">23</div>
<div class="a" style="left:1201px;top:-1px;font-size:8.5px;color:#c4c7c5;line-height:12px">61</div>
<div class="a" style="left:835px;top:120.02px;width:435px;height:33.84px;background:#004a77"></div>
<div class="a" style="left:837px;top:121.42px;font-size:8px;color:#ddd;line-height:8px;letter-spacing:-0.5px">···</div>
<div class="ln" style="left:944.40px;top:15.20px"><span class="tg">&lt;div</span> <span class="an">data-v-0125cb76</span> <span class="an">style=</span><span class="an">"</span><span class="av">flex: 1 1 0%; padding: 0px; overflow: auto;</span></div>
<div class="ln" style="left:944.40px;top:26.78px"><span class="av"></span><span class="an">"</span><span class="tg">&gt;</span></div>
<div class="ln" style="left:952.70px;top:38.36px"><span class="cm">&lt;!----&gt;</span></div>
<div class="ln" style="left:952.70px;top:49.94px"><span class="tg">&lt;div</span> <span class="an">data-v-0125cb76</span> <span class="an">class=</span><span class="an">"</span><span class="av">console-right-content</span><span class="an">"</span><span class="tg">&gt;</span></div>
<div class="ln" style="left:961.00px;top:61.52px"><span class="tg">&lt;div</span> <span class="an">data-v-14df2d4a</span> <span class="an">data-v-792144cf</span> <span class="an">devid=</span><span class="an">"</span><span class="av">listbfa</span><span class="an">"</span> <span class="an">class=</span><span class="an">"</span><span class="av">objectTa</span></div>
<div class="ln" style="left:961.00px;top:73.10px"><span class="av">bleMain listbfa</span><span class="an">"</span> <span class="an">data-v-0125cb76</span><span class="tg">&gt;</span><span class="badge">flex</span></div>
<div class="ln" style="left:969.30px;top:84.68px"><span class="tg">&lt;div</span> <span class="an">data-v-14df2d4a</span> <span class="an">class=</span><span class="an">"</span><span class="av">object_box</span><span class="an">"</span><span class="tg">&gt;</span><span class="badge">flex</span></div>
<div class="ln" style="left:977.60px;top:96.26px"><span class="tg">&lt;div</span> <span class="an">data-v-14df2d4a</span> <span class="an">class=</span><span class="an">"</span><span class="av">topContent</span><span class="an">"</span><span class="tg">&gt;</span><span class="badge">flex</span></div>
<div class="ln" style="left:985.90px;top:107.84px"><span class="tg">&lt;div</span> <span class="an">data-v-14df2d4a</span> <span class="an">class=</span><span class="an">"</span><span class="av">left-content</span><span class="an">"</span><span class="tg">&gt;</span><span class="badge">flex</span></div>
<div class="ln" style="left:994.20px;top:119.42px"><span class="tg">&lt;button</span> <span class="an">data-v-14df2d4a</span> <span class="an">type=</span><span class="an">"</span><span class="av">button</span><span class="an">"</span> <span class="an">class=</span><span class="an">"</span><span class="av">el-button refre</span></div>
<div class="ln" style="left:994.20px;top:131.00px"><span class="av">shBtn buttonClass refresh-btn el-button--default el-button--</span></div>
<div class="ln" style="left:994.20px;top:142.58px"><span class="av">small</span><span class="an">"</span> <span class="an">devid=</span><span class="an">"</span><span class="av">refresh-btn</span><span class="an">"</span><span class="tg">&gt;</span><span class="ell"></span><span class="tg">&lt;/button</span><span class="tg">&gt;</span><span class="gr"> == $0</span></div>
<div class="ln" style="left:994.20px;top:154.16px"><span class="tg">&lt;input</span> <span class="an">data-v-14df2d4a</span> <span class="an">id=</span><span class="an">"</span><span class="av">viewId</span><span class="an">"</span> <span class="an">type=</span><span class="an">"</span><span class="av">hidden</span><span class="an">"</span> <span class="an">value=</span><span class="an">"</span><span class="av">aec2</span></div>
<div class="ln" style="left:994.20px;top:165.74px"><span class="av">0220824sysview2</span><span class="an">"</span><span class="tg">&gt;</span></div>
<div class="ln" style="left:994.20px;top:177.32px"><span class="tg">&lt;input</span> <span class="an">data-v-14df2d4a</span> <span class="an">id=</span><span class="an">"</span><span class="av">ids</span><span class="an">"</span> <span class="an">type=</span><span class="an">"</span><span class="av">hidden</span><span class="an">"</span><span class="tg">&gt;</span></div>
<div class="ln" style="left:994.20px;top:188.90px"><span class="tg">&lt;div</span> <span class="an">data-v-6b4b6798</span> <span class="an">data-v-14df2d4a</span> <span class="an">devid=</span><span class="an">"</span><span class="av">filter-button</span><span class="an">"</span></div>
<div class="ln" style="left:994.20px;top:200.48px"><span class="an">class=</span><span class="an">"</span><span class="av">myFiterButton filter-button</span><span class="an">"</span><span class="tg">&gt;</span><span class="ell"></span><span class="tg">&lt;/div</span><span class="tg">&gt;</span></div>
<div class="ln" style="left:994.20px;top:212.06px"><span class="tg">&lt;div</span> <span class="an">data-v-32fefac3</span> <span class="an">data-v-14df2d4a</span> <span class="an">devid=</span><span class="an">"</span><span class="av">view-toggle</span><span class="an">"</span></div>
<div class="ln" style="left:994.20px;top:223.64px"><span class="an">class=</span><span class="an">"</span><span class="av">chooseView pull-left</span><span class="an">"</span> <span class="an">prefix=</span><span class="an">"</span><span class="av">bfa</span><span class="an">"</span><span class="tg">&gt;</span><span class="ell"></span><span class="tg">&lt;/div</span><span class="tg">&gt;</span><span class="badge">flex</span></div>
<div class="ln" style="left:994.20px;top:235.22px"><span class="tg">&lt;div</span> <span class="an">data-v-0f1e2988</span> <span class="an">data-v-14df2d4a</span> <span class="an">devid=</span><span class="an">"</span><span class="av">layout-toggle</span><span class="an">"</span></div>
<div class="ln" style="left:994.20px;top:246.80px"><span class="an">class=</span><span class="an">"</span><span class="av">chooseView layout-toggle pull-left</span><span class="an">"</span><span class="tg">&gt;</span><span class="ell"></span><span class="tg">&lt;/div</span><span class="tg">&gt;</span><span class="badge">flex</span></div>
<div class="ln" style="left:994.20px;top:258.38px"><span class="tg">&lt;div</span> <span class="an">data-v-d48c22f2</span> <span class="an">data-v-14df2d4a</span> <span class="an">devid=</span><span class="an">"</span><span class="av">select-size</span><span class="an">"</span></div>
<div class="ln" style="left:994.20px;top:269.96px"><span class="an">class=</span><span class="an">"</span><span class="av">buttonWrapper select-size</span><span class="an">"</span> <span class="an">style=</span><span class="an">"</span><span class="av">display: none;</span><span class="an">"</span><span class="tg">&gt;</span><span class="ell"></span></div>
<div class="ln" style="left:994.20px;top:281.54px"><span class="tg">&lt;/div</span><span class="tg">&gt;</span></div>
<div class="ln" style="left:994.20px;top:293.12px"><span class="tg">&lt;div</span> <span class="an">data-v-d9c95710</span> <span class="an">data-v-14df2d4a</span> <span class="an">devid=</span><span class="an">"</span><span class="av">batch-button</span><span class="an">"</span></div>
<div class="ln" style="left:994.20px;top:304.70px"><span class="an">class=</span><span class="an">"</span><span class="av">buttonWrapper batch-button</span><span class="an">"</span> <span class="an">istag=</span><span class="an">"</span><span class="av">true</span><span class="an">"</span> <span class="an">type=</span><span class="an">"</span><span class="av">table</span><span class="an">"</span></div>
<div class="ln" style="left:994.20px;top:316.28px"><span class="an">objid=</span><span class="an">"</span><span class="av">task</span><span class="an">"</span> <span class="an">view-name=</span><span class="an">"</span><span class="av">所有未处理任务</span><span class="an">"</span> <span class="an">reportlist</span> <span class="an">viewinfos=</span></div>
<div class="ln" style="left:994.20px;top:327.86px"><span class="an">"</span><span class="av">[object Object]</span><span class="an">"</span> <span class="an">totalsize=</span><span class="an">"</span><span class="av">526</span><span class="an">"</span> <span class="an">style=</span><span class="an">"</span><span class="av">display: none;</span><span class="an">"</span><span class="tg">&gt;</span><span class="ell"></span></div>
<div class="ln" style="left:994.20px;top:339.44px"><span class="tg">&lt;/div</span><span class="tg">&gt;</span></div>
<div class="ln" style="left:994.20px;top:351.02px"><span class="tg">&lt;div</span> <span class="an">data-v-6f899437</span> <span class="an">data-v-14df2d4a</span> <span class="an">devid=</span><span class="an">"</span><span class="av">search-wrapper</span><span class="an">"</span></div>
<div class="ln" style="left:994.20px;top:362.60px"><span class="an">class=</span><span class="an">"</span><span class="av">search_box search-wrapper searchWrapper pull-right</span><span class="an">"</span><span class="tg">&gt;</span></div>
<div class="ln" style="left:994.20px;top:374.18px"><span class="ell"></span><span class="tg">&lt;/div</span><span class="tg">&gt;</span></div>
<svg class="a" style="left:0;top:0" width="1280" height="618" fill="#c4c7c5"><path d="M936.70 18.69 h6 l-3 4.3 z"/><path d="M945.00 53.43 h6 l-3 4.3 z"/><path d="M953.30 65.01 h6 l-3 4.3 z"/><path d="M961.60 88.17 h6 l-3 4.3 z"/><path d="M969.90 99.75 h6 l-3 4.3 z"/><path d="M978.20 111.33 h6 l-3 4.3 z"/><path d="M987.50 122.21 v6 l4.3 -3 z"/><path d="M987.50 191.69 v6 l4.3 -3 z"/><path d="M987.50 214.85 v6 l4.3 -3 z"/><path d="M987.50 238.01 v6 l4.3 -3 z"/><path d="M987.50 261.17 v6 l4.3 -3 z"/><path d="M987.50 295.91 v6 l4.3 -3 z"/><path d="M987.50 353.81 v6 l4.3 -3 z"/></svg>
<div class="a" style="left:1270px;top:13px;width:10px;height:373px;background:#2b2b2b"></div>
<div class="a" style="left:1271px;top:76px;width:8px;height:57px;background:#4d4d4d"></div>
<svg class="a" style="left:1270px;top:13px" width="10" height="373" fill="#ddd"><path d="M2.5 7.5 h5 l-2.5 -3 z"/><path d="M2.5 364 h5 l-2.5 3 z"/></svg>
<div class="a" style="left:835px;top:385.8px;width:445px;height:16.5px;background:#282828;border-top:1px solid #3a3a3a"></div>
<div class="a" style="left:836px;top:387px;width:15px;height:14.5px;background:#2e2e2e;border:1px solid #444;border-radius:2px"></div>
<svg class="a" style="left:836px;top:387px" width="15" height="15" fill="#ddd"><path d="M9.5 4.5 v6 l-4 -3 z"/></svg>
<div class="a" style="left:851px;top:388px;font-size:8.3px;color:#9ab6e8;white-space:nowrap;line-height:12px">tent</div>
<div class="a" style="left:876.8px;top:388px;font-size:8.3px;color:#9ab6e8;white-space:nowrap;line-height:12px">div.left-content</div>
<div class="a" style="left:937.3px;top:386.5px;width:327px;height:15.5px;background:#004a77"></div>
<div class="a" style="left:942px;top:388px;font-size:8.43px;color:#c6d8f3;white-space:nowrap;line-height:12px">button.el-button.refreshBtn.buttonClass.refresh-btn.el-button--default.el-button--small</div>
<div class="a" style="left:1265px;top:386.7px;width:14px;height:15px;background:#2e2e2e"></div>
<svg class="a" style="left:1265px;top:387px" width="15" height="15" fill="#bbb"><path d="M5 4.5 v6 l4 -3 z"/></svg>
<div class="a" style="left:835px;top:402.3px;width:445px;height:19.3px;background:#3c3c3c;border-bottom:1px solid #4a4a4a"></div>
<div class="a" style="left:841px;top:405.8px;color:#a8c7fa;white-space:nowrap;line-height:12px"><span style="font-size:9px;letter-spacing:-0.45px;-webkit-text-stroke:0.12px currentColor;vertical-align:0px">样式</span></div>
<div class="a" style="left:871.5px;top:405.8px;color:#c4c7c5;white-space:nowrap;line-height:12px"><span style="font-size:9px;letter-spacing:-0.45px;-webkit-text-stroke:0.12px currentColor;vertical-align:0px">计算样式</span></div>
<div class="a" style="left:918.5px;top:405.8px;color:#c4c7c5;white-space:nowrap;line-height:12px"><span style="font-size:9px;letter-spacing:-0.45px;-webkit-text-stroke:0.12px currentColor;vertical-align:0px">布局</span></div>
<div class="a" style="left:949px;top:405.8px;color:#c4c7c5;white-space:nowrap;line-height:12px"><span style="font-size:9px;letter-spacing:-0.45px;-webkit-text-stroke:0.12px currentColor;vertical-align:0px">事件监听器</span></div>
<div class="a" style="left:1003.5px;top:405.8px;color:#c4c7c5;white-space:nowrap;line-height:12px"><span style="font-size:8.6px;letter-spacing:0px">DOM </span><span style="font-size:9px;letter-spacing:-0.45px;-webkit-text-stroke:0.12px currentColor;vertical-align:0px">断点</span></div>
<div class="a" style="left:1055px;top:405.8px;color:#c4c7c5;white-space:nowrap;line-height:12px"><span style="font-size:9px;letter-spacing:-0.45px;-webkit-text-stroke:0.12px currentColor;vertical-align:0px">属性</span></div>
<div class="a" style="left:1085px;top:405.8px;color:#c4c7c5;white-space:nowrap;line-height:12px"><span style="font-size:9px;letter-spacing:-0.45px;-webkit-text-stroke:0.12px currentColor;vertical-align:0px">无障碍功能</span></div>
<div class="a" style="left:835px;top:419.5px;width:31px;height:1.5px;background:#7cacf8"></div>
<div class="a" style="left:835px;top:421.6px;width:435px;height:17.2px;background:#282828;border-bottom:1px solid #3a3a3a"></div>
<div class="a" style="left:837.5px;top:423.5px;width:318px;height:13px;border:1px solid #5f5f5f;border-radius:3px;background:#282828"></div>
<div class="a" style="left:841px;top:424.5px;font-size:8.3px;color:#9aa0a6;white-space:nowrap;line-height:12px">过滤</div>
<div class="a" style="left:1164.2px;top:425px;font-family:Liberation Mono,monospace;font-size:8.3px;letter-spacing:-0.6px;font-weight:bold;color:#e3e3e3;white-space:pre;line-height:11px">:hov</div>
<div class="a" style="left:1189px;top:425px;font-family:Liberation Mono,monospace;font-size:8.3px;letter-spacing:-0.6px;font-weight:bold;color:#e3e3e3;white-space:pre;line-height:11px">.cls</div>
<svg class="a" style="left:1210px;top:421px" width="60" height="18" fill="none" stroke="#e3e3e3" stroke-width="1.1"><path d="M6 9 h8.6 M10.3 5 v8.4"/><path d="M13.2 15 l3.5 -3.5 v3.5 z" fill="#e3e3e3" stroke="none"/><rect x="25.5" y="4.6" width="8" height="4.4" rx="1"/><path d="M26.6 9 v2.2 h5.8 v-2.2 M29.5 11.2 v3.8" /><rect x="41.5" y="4.8" width="9.4" height="9.4" rx="1"/><path d="M47.7 4.8 v9.4"/><path d="M45.6 7.6 v4 l-2.2 -2 z" fill="#e3e3e3" stroke="none"/></svg>
<div class="a" style="left:1270px;top:421.6px;width:10px;height:196.4px;background:#2b2b2b"></div>
<div class="a" style="left:1271px;top:432px;width:8px;height:13.4px;background:#4d4d4d"></div>
<svg class="a" style="left:1270px;top:421.6px" width="10" height="197" fill="#ddd"><path d="M2.5 7 h5 l-2.5 -3 z"/><path d="M2.5 192 h5 l-2.5 3 z"/></svg>
<div class="sl" style="left:838px;top:442.00px;">element.style {</div>
<div class="sl" style="left:838px;top:452.20px;">}</div>
<div class="a" style="left:835px;top:463.90px;width:435px;height:1px;background:#3c3c3c"></div>
<div class="sl" style="left:838px;top:466.90px;">.refreshBtn[data-v-14df2d4a] {</div>
<div class="sl" style="left:1100px;width:168.5px;text-align:right;top:466.90px;color:#c7c7c7;text-decoration:underline">index.vue:3044</div>
<div class="sl" style="left:849.8px;top:477.90px;"><span style=""><span class="pn">padding</span>: <span style="display:inline-block;width:0;height:0;border-left:4.5px solid #c4c7c5;border-top:3px solid transparent;border-bottom:3px solid transparent;margin:0 3.5px 0 0.5px;vertical-align:0px"></span>8px 9px !important;</span></div>
<div class="sl" style="left:849.8px;top:487.45px;"><span style=""><span class="pn">margin-right</span>: 8px;</span></div>
<div class="sl" style="left:838px;top:496.85px;">}</div>
<div class="a" style="left:835px;top:508.55px;width:435px;height:1px;background:#3c3c3c"></div>
<div class="sl" style="left:838px;top:511.55px;">.el-button--small {</div>
<div class="sl" style="left:1100px;width:168.5px;text-align:right;top:511.55px;color:#c7c7c7;text-decoration:underline">C:\WorkSpac…ns.scss:111</div>
<div class="sl" style="left:849.8px;top:522.55px;"><span style="text-decoration:line-through;"><span class="pn">padding</span>: <span style="display:inline-block;width:0;height:0;border-left:4.5px solid #c4c7c5;border-top:3px solid transparent;border-bottom:3px solid transparent;margin:0 3.5px 0 0.5px;vertical-align:0px"></span>9px 15px;</span></div>
<div class="sl" style="left:849.8px;top:532.10px;"><span style=""><span class="pn">font-size</span>: 12px;</span></div>
<div class="sl" style="left:849.8px;top:541.65px;"><span style=""><span class="pn">border-radius</span>: <span style="display:inline-block;width:0;height:0;border-left:4.5px solid #c4c7c5;border-top:3px solid transparent;border-bottom:3px solid transparent;margin:0 3.5px 0 0.5px;vertical-align:0px"></span>3px;</span></div>
<div class="sl" style="left:838px;top:551.05px;">}</div>
<div class="a" style="left:835px;top:562.75px;width:435px;height:1px;background:#3c3c3c"></div>
<div class="sl" style="left:838px;top:565.75px;">.el-button {</div>
<div class="sl" style="left:1100px;width:168.5px;text-align:right;top:565.75px;color:#c7c7c7;text-decoration:underline">C:\WorkSpac…ins.scss:73</div>
<div class="sl" style="left:849.8px;top:576.75px;"><span style=""><span class="pn">display</span>: inline-block;</span></div>
<div class="sl" style="left:849.8px;top:586.30px;"><span style=""><span class="pn">line-height</span>: 1;</span></div>
<div class="sl" style="left:849.8px;top:595.85px;"><span style=""><span class="pn">white-space</span>: <span style="display:inline-block;width:0;height:0;border-left:4.5px solid #c4c7c5;border-top:3px solid transparent;border-bottom:3px solid transparent;margin:0 3.5px 0 0.5px;vertical-align:0px"></span>nowrap;</span></div>
<div class="sl" style="left:849.8px;top:605.40px;"><span style=""><span class="pn">cursor</span>: pointer;</span></div>
<div class="sl" style="left:849.8px;top:614.95px;"><span class="pn">background</span>: <span style="display:inline-block;width:0;height:0;border-left:4.5px solid #c4c7c5;border-top:3px solid transparent;border-bottom:3px solid transparent;margin:0 3.5px 0 0.5px;vertical-align:0px"></span><span style="display:inline-block;width:6px;height:6px;background:#fff;border:1px solid #999;vertical-align:-0.5px;margin-right:2px"></span>#FFFFFF;</div>
<div class="sl" style="left:838px;top:624.35px;">}</div>
<div class="a" style="left:835px;top:636.05px;width:435px;height:1px;background:#3c3c3c"></div>
<div class="a" style="left:1019.4px;top:138.5px;width:100.6px;height:22.1px;border:2.5px solid #e8151b"></div>
</body></html>
